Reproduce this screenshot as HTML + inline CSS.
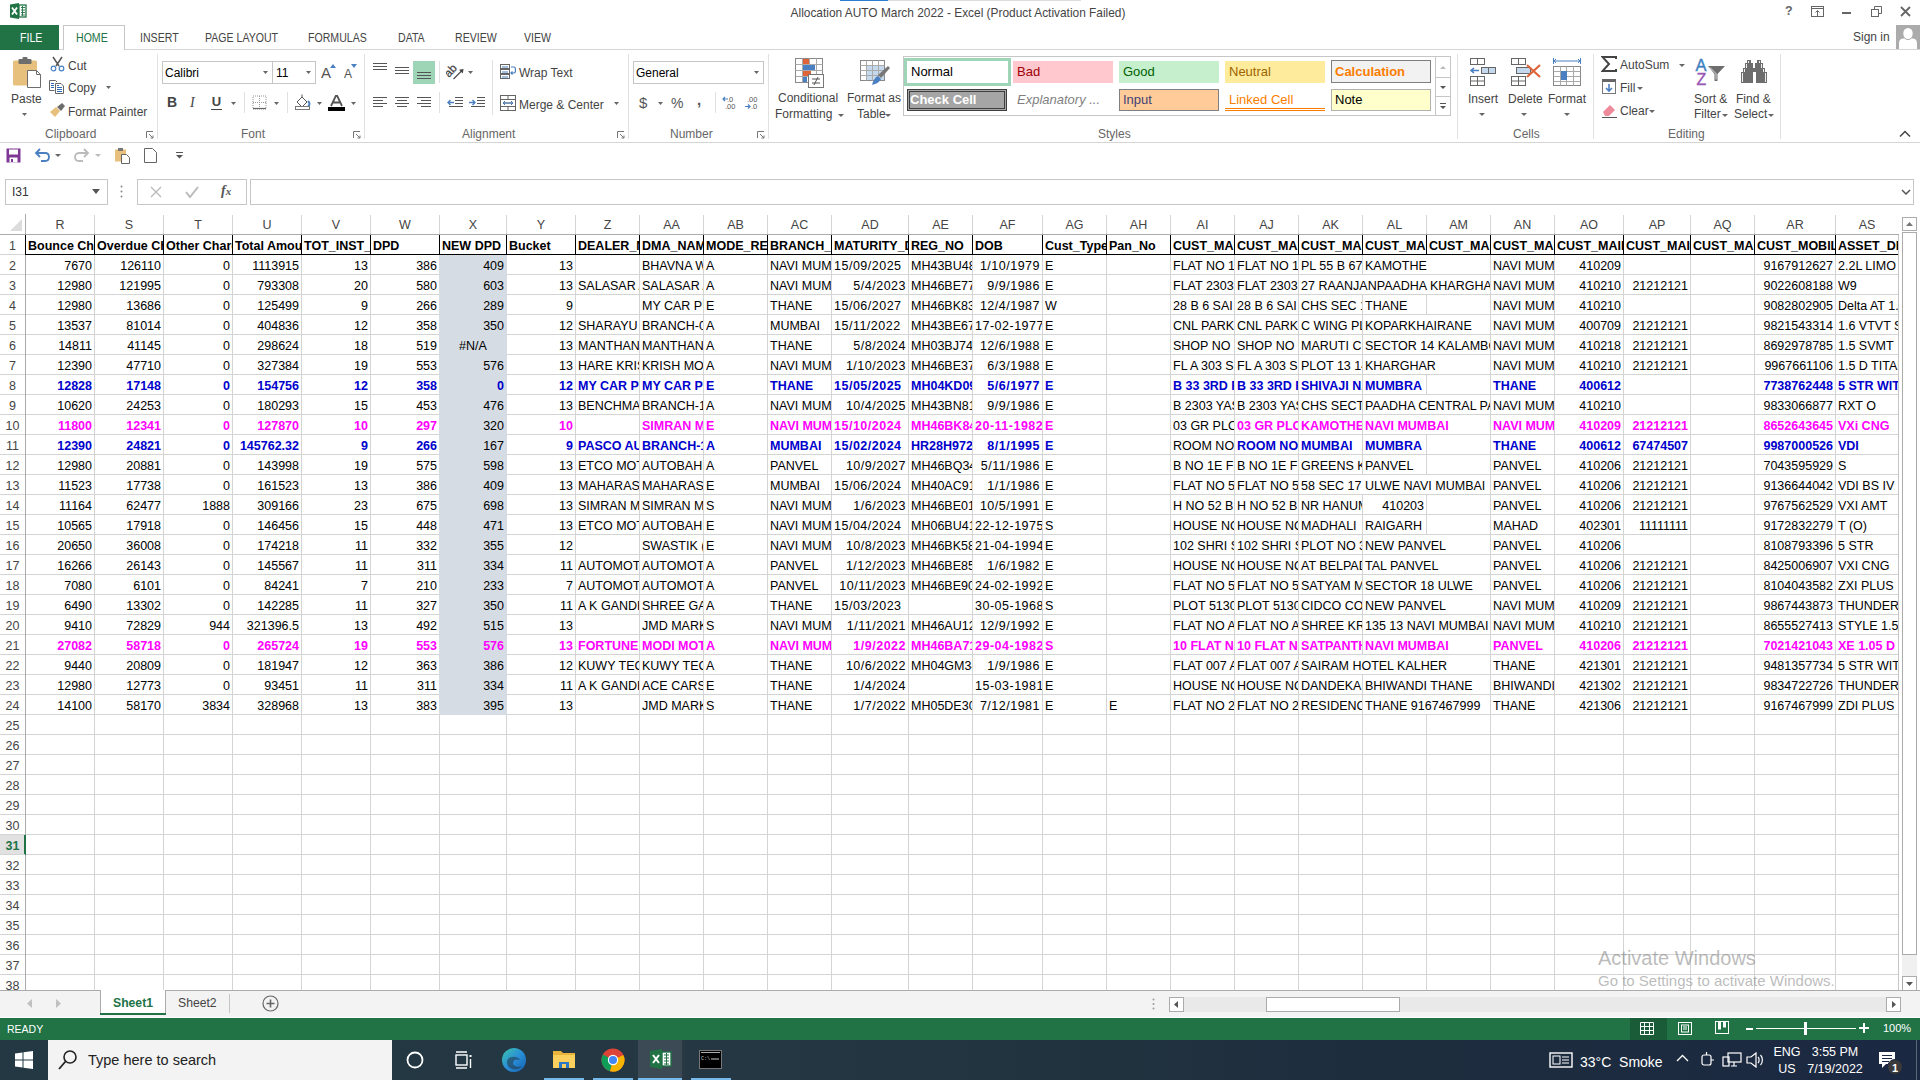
<!DOCTYPE html><html><head><meta charset="utf-8"><style>

*{box-sizing:border-box}
html,body{margin:0;padding:0;width:1920px;height:1080px;overflow:hidden;background:#fff;font-family:"Liberation Sans", sans-serif}
.abs{position:absolute}
.ch{position:absolute;top:1px;height:19px;line-height:21px;text-align:center;font-size:12.5px;color:#444}
.rh{position:absolute;left:0;width:25px;height:19px;line-height:23px;text-align:center;font-size:12.5px;color:#444}
.c{position:absolute;height:20px;line-height:23px;font-size:12.5px;white-space:pre;overflow:hidden;padding:0 2px;border-right:1px solid #d4d4d4;border-bottom:1px solid #d4d4d4}
.c.b{font-weight:bold}
.c.r{text-align:right}
.c.ctr{text-align:center}
.tab{position:absolute;top:30px;font-size:12.3px;color:#444;line-height:16px;transform:scaleX(0.86);transform-origin:0 0;white-space:nowrap}
.gsep{position:absolute;top:54px;width:1px;height:85px;background:#e1e1e1}
.glab{position:absolute;top:127px;font-size:12px;color:#666;line-height:15px}
.rt{position:absolute;font-size:12px;color:#444;line-height:16px;white-space:nowrap}
.box{position:absolute;border:1px solid #c6c6c6;background:#fff}
.vsep{position:absolute;width:1px;background:#e1e1e1}
.sty{position:absolute;font-size:13px;line-height:17px;white-space:nowrap}

</style></head><body>
<!-- title bar -->
<svg class="abs" style="left:9px;top:2px" width="19" height="18" viewBox="0 0 19 18">
  <path d="M1 2.5 L10 1 L10 17 L1 15.5 Z" fill="#217346"/>
  <rect x="10" y="3" width="7" height="12" fill="#fff" stroke="#217346" stroke-width="1.3"/>
  <path d="M12 5.5h4M12 8h4M12 10.5h4M12 13h4M13.5 4v10" stroke="#217346" stroke-width="0.9"/>
  <path d="M3 5.5 L8 12.5 M8 5.5 L3 12.5" stroke="#fff" stroke-width="1.8"/>
</svg>
<div class="abs" style="left:840px;top:0;width:48px;height:1px;background:#2b7cd3"></div><div class="abs" style="left:888px;top:0;width:193px;height:1px;background:#ddd"></div>
<div class="abs" style="left:0;top:6px;width:1916px;text-align:center;font-size:11.9px;color:#444;line-height:15px">Allocation AUTO March 2022 - Excel (Product Activation Failed)</div>
<!-- window buttons -->
<div class="abs" style="left:1785px;top:3px;font-size:12.5px;font-weight:bold;color:#666;line-height:16px">?</div>
<svg class="abs" style="left:1811px;top:6px" width="13" height="11"><rect x="0.5" y="0.5" width="12" height="10" fill="none" stroke="#666"/><path d="M0.5 2.5h12" stroke="#666"/><path d="M6.5 10V5M4.5 6.5l2-2 2 2" stroke="#666" fill="none"/></svg>
<div class="abs" style="left:1842px;top:12px;width:9px;height:2px;background:#666"></div>
<svg class="abs" style="left:1871px;top:6px" width="11" height="11"><path d="M3.5 3V0.5h7v7H8" fill="none" stroke="#666"/><rect x="0.5" y="3.5" width="7" height="7" fill="none" stroke="#666"/></svg>
<svg class="abs" style="left:1900px;top:6px" width="11" height="11"><path d="M1 1l9 9M10 1L1 10" stroke="#666" stroke-width="1.8"/></svg>

<!-- tabs -->
<div class="abs" style="left:0;top:49px;width:1920px;height:1px;background:#d5d5d5"></div>
<div class="abs" style="left:0;top:25px;width:59px;height:25px;background:#217346"></div><div class="tab" style="left:20px;color:#fff">FILE</div>
<div class="abs" style="left:63px;top:25px;width:62px;height:25px;background:#fff;border:1px solid #c6c6c6;border-bottom:none"></div><div class="tab" style="left:76px;color:#217346">HOME</div>
<div class="tab" style="left:140px">INSERT</div>
<div class="tab" style="left:205px">PAGE LAYOUT</div>
<div class="tab" style="left:308px">FORMULAS</div>
<div class="tab" style="left:398px">DATA</div>
<div class="tab" style="left:455px">REVIEW</div>
<div class="tab" style="left:524px">VIEW</div>
<div class="abs" style="left:1853px;top:30px;font-size:12px;color:#444;line-height:15px">Sign in</div>
<svg class="abs" style="left:1896px;top:25px" width="24" height="24"><rect width="24" height="24" fill="#ababab"/><ellipse cx="12" cy="8.5" rx="4.7" ry="5.6" fill="#fff"/><path d="M3 24V19C3 14.5 5 13.5 8.5 13.5Q12 16.5 15.5 13.5C19 13.5 21 14.5 21 19V24Z" fill="#fff"/></svg>

<!-- ribbon -->
<div class="abs" style="left:0;top:142px;width:1920px;height:1px;background:#d5d5d5"></div>
<!-- group separators -->
<div class="gsep" style="left:157px"></div>
<div class="gsep" style="left:364px"></div>
<div class="gsep" style="left:628px"></div>
<div class="gsep" style="left:768px"></div>
<div class="gsep" style="left:1457px"></div>
<div class="gsep" style="left:1593px"></div>
<div class="gsep" style="left:1780px"></div>
<!-- group labels -->
<div class="glab" style="left:45px">Clipboard</div>
<div class="glab" style="left:241px">Font</div>
<div class="glab" style="left:462px">Alignment</div>
<div class="glab" style="left:670px">Number</div>
<div class="glab" style="left:1098px">Styles</div>
<div class="glab" style="left:1513px">Cells</div>
<div class="glab" style="left:1668px">Editing</div>
<!-- launchers -->
<svg class="abs launch" style="left:146px;top:131px" width="8" height="8"><path d="M0.5 7V0.5H7M3 3l4 4M7 4.5V7H4.5" fill="none" stroke="#777"/></svg>
<svg class="abs launch" style="left:353px;top:131px" width="8" height="8"><path d="M0.5 7V0.5H7M3 3l4 4M7 4.5V7H4.5" fill="none" stroke="#777"/></svg>
<svg class="abs launch" style="left:617px;top:131px" width="8" height="8"><path d="M0.5 7V0.5H7M3 3l4 4M7 4.5V7H4.5" fill="none" stroke="#777"/></svg>
<svg class="abs launch" style="left:757px;top:131px" width="8" height="8"><path d="M0.5 7V0.5H7M3 3l4 4M7 4.5V7H4.5" fill="none" stroke="#777"/></svg>
<svg class="abs" style="left:1899px;top:130px" width="12" height="8"><path d="M1 6.5l5-5 5 5" fill="none" stroke="#444" stroke-width="1.5"/></svg>

<!-- Clipboard -->
<svg class="abs" style="left:12px;top:57px" width="31" height="33">
  <rect x="1" y="3.5" width="24" height="25" rx="1.5" fill="#e8c07d"/>
  <rect x="6.5" y="2" width="13" height="5" rx="1" fill="#6d6d6d"/>
  <rect x="10.5" y="0" width="5" height="4" rx="1" fill="#6d6d6d"/>
  <path d="M15.5 13.5h9l4 4v13h-13z" fill="#fff" stroke="#6d6d6d"/>
  <path d="M24.5 13.5v4h4" fill="none" stroke="#6d6d6d"/>
</svg>
<div class="rt" style="left:11px;top:91px">Paste</div>
<svg class="abs" style="left:22px;top:113px" width="5" height="3"><path d="M0 0h5l-2.5 3z" fill="#666"/></svg>
<svg class="abs" style="left:50px;top:56px" width="15" height="16"><path d="M3 1l6 9M12 1L6 10" stroke="#555" stroke-width="1.5"/><circle cx="3.5" cy="12.5" r="2.3" fill="none" stroke="#4a7fc1" stroke-width="1.2"/><circle cx="11.5" cy="12.5" r="2.3" fill="none" stroke="#4a7fc1" stroke-width="1.2"/></svg>
<div class="rt" style="left:68px;top:58px">Cut</div>
<svg class="abs" style="left:48px;top:79px" width="17" height="16"><path d="M1.5 11.5V1.5h6l1.5 1.5M1.5 11.5h5" fill="none" stroke="#666"/><path d="M7.5 4.5h5.5l2.5 2.5v7.5h-8z" fill="#fff" stroke="#666"/><path d="M3 4.5h3M3 6.5h3M3 8.5h3M9 8.5h5M9 10.5h5M9 12.5h5M9 6.5h2" stroke="#2e6db4"/></svg>
<div class="rt" style="left:68px;top:80px">Copy</div>
<svg class="abs" style="left:106px;top:86px" width="5" height="3"><path d="M0 0h5l-2.5 3z" fill="#666"/></svg>
<svg class="abs" style="left:49px;top:102px" width="17" height="16"><path d="M1 10l6-5 4 4-5 6z" fill="#e8c07d"/><path d="M8 5l5-4 3 3-4 5z" fill="#6d6d6d"/></svg>
<div class="rt" style="left:68px;top:104px">Format Painter</div>

<!-- Font -->
<div class="box" style="left:162px;top:61px;width:111px;height:23px"></div>
<div class="rt" style="left:165px;top:65px;color:#000">Calibri</div>
<svg class="abs" style="left:263px;top:71px" width="5" height="3"><path d="M0 0h5l-2.5 3z" fill="#666"/></svg>
<div class="box" style="left:272px;top:61px;width:44px;height:23px"></div>
<div class="rt" style="left:276px;top:65px;color:#000">11</div>
<svg class="abs" style="left:306px;top:71px" width="5" height="3"><path d="M0 0h5l-2.5 3z" fill="#666"/></svg>
<div class="abs" style="left:321px;top:64px;font-size:15px;color:#555;line-height:18px">A</div>
<svg class="abs" style="left:330px;top:64px" width="6" height="4"><path d="M0 4h6L3 0z" fill="#4a7fc1"/></svg>
<div class="abs" style="left:344px;top:67px;font-size:12px;color:#555;line-height:15px">A</div>
<svg class="abs" style="left:351px;top:64px" width="6" height="4"><path d="M0 0h6L3 4z" fill="#4a7fc1"/></svg>
<div class="abs" style="left:167px;top:95px;font-size:14px;font-weight:bold;color:#444;line-height:15px">B</div>
<div class="abs" style="left:190px;top:95px;font-size:14px;font-style:italic;font-family:'Liberation Serif',serif;color:#444;line-height:15px">I</div>
<div class="abs" style="left:211px;top:95px;font-size:13px;font-weight:bold;color:#444;line-height:14px;border-bottom:1.5px solid #444;width:11px;text-align:center">U</div>
<svg class="abs" style="left:231px;top:102px" width="5" height="3"><path d="M0 0h5l-2.5 3z" fill="#666"/></svg>
<div class="vsep" style="left:244px;top:92px;height:21px"></div>
<svg class="abs" style="left:252px;top:95px" width="15" height="15"><path d="M1 1h13v13H1zM7.5 1v13M1 7.5h13" fill="none" stroke="#999" stroke-dasharray="1 1"/><path d="M1 13.5h13" stroke="#666" stroke-width="1.2"/></svg>
<svg class="abs" style="left:274px;top:102px" width="5" height="3"><path d="M0 0h5l-2.5 3z" fill="#666"/></svg>
<div class="vsep" style="left:287px;top:92px;height:21px"></div>
<svg class="abs" style="left:294px;top:94px" width="18" height="17"><path d="M3 8l5-5 5 5-5 5z" fill="#fff" stroke="#555"/><path d="M8 3V0.5" stroke="#555"/><path d="M14 7c2 2 2 4 0 5" stroke="#4a7fc1" stroke-width="2" fill="none"/><rect x="1.5" y="12.5" width="14" height="3" fill="#fff" stroke="#777"/></svg>
<svg class="abs" style="left:317px;top:102px" width="5" height="3"><path d="M0 0h5l-2.5 3z" fill="#666"/></svg>
<svg class="abs" style="left:328px;top:95px" width="17" height="16"><path d="M3 11L8 0.5h1L14 11M5 7.5h7" fill="none" stroke="#555" stroke-width="1.8"/><rect x="0" y="12" width="17" height="4" fill="#000"/></svg>
<svg class="abs" style="left:351px;top:102px" width="5" height="3"><path d="M0 0h5l-2.5 3z" fill="#666"/></svg>

<!-- Alignment -->
<svg class="abs" style="left:373px;top:63px" width="15" height="10"><path d="M0 0.5h14M0 3.5h14M0 6.5h14" stroke="#555"/></svg>
<svg class="abs" style="left:395px;top:67px" width="15" height="10"><path d="M0 0.5h14M0 3.5h14M0 6.5h14" stroke="#555"/></svg>
<div class="abs" style="left:413px;top:61px;width:22px;height:23px;background:#9fd5b7"></div>
<svg class="abs" style="left:417px;top:72px" width="15" height="10"><path d="M0 0.5h14M0 3.5h14M0 6.5h14" stroke="#555"/></svg>
<div class="vsep" style="left:439px;top:61px;height:22px"></div>
<svg class="abs" style="left:446px;top:63px" width="20" height="18"><text x="0" y="0" font-size="11.5" fill="#444" font-family="Liberation Sans" stroke="#444" stroke-width="0.3" transform="translate(3 15) rotate(-48)">ab</text><path d="M7.5 16L16.5 7" stroke="#444" stroke-width="1.1"/><path d="M17.5 6L13 6.7 16.8 10.5z" fill="#444"/></svg>
<svg class="abs" style="left:468px;top:71px" width="5" height="3"><path d="M0 0h5l-2.5 3z" fill="#666"/></svg>
<div class="vsep" style="left:492px;top:60px;height:55px"></div>
<svg class="abs" style="left:500px;top:64px" width="17" height="16"><rect x="0.5" y="0.5" width="9" height="4" fill="none" stroke="#666"/><rect x="0.5" y="5.5" width="9" height="4" fill="none" stroke="#666"/><rect x="0.5" y="10.5" width="9" height="4" fill="none" stroke="#666"/><path d="M2 3h6M2 8h6M2 13h6" stroke="#4a7fc1"/><path d="M11 3h3c2 0 2 6 0 6h-3M12.5 7.5L11 9l1.5 1.5" fill="none" stroke="#4a7fc1" stroke-width="1.2"/></svg>
<div class="rt" style="left:519px;top:65px">Wrap Text</div>
<svg class="abs" style="left:500px;top:95px" width="16" height="16"><rect x="0.5" y="0.5" width="15" height="15" fill="#fff" stroke="#666"/><path d="M0.5 4.5h15M0.5 11.5h15M8 0.5v4M8 11.5v4M5 0.5v0M3 8h10M5 6l-2 2 2 2M11 6l2 2-2 2" fill="none" stroke="#666"/><path d="M3 8h10M5 6.5L3 8l2 1.5M11 6.5L13 8l-2 1.5" fill="none" stroke="#4a7fc1"/></svg>
<div class="rt" style="left:519px;top:97px">Merge &amp; Center</div>
<svg class="abs" style="left:614px;top:102px" width="5" height="3"><path d="M0 0h5l-2.5 3z" fill="#666"/></svg>
<svg class="abs" style="left:373px;top:97px" width="15" height="12"><path d="M0 0.5h14M0 3.5h10M0 6.5h14M0 9.5h10" stroke="#555"/></svg>
<svg class="abs" style="left:395px;top:97px" width="15" height="12"><path d="M0 0.5h14M2 3.5h10M0 6.5h14M2 9.5h10" stroke="#555"/></svg>
<svg class="abs" style="left:417px;top:97px" width="15" height="12"><path d="M0 0.5h14M4 3.5h10M0 6.5h14M4 9.5h10" stroke="#555"/></svg>
<div class="vsep" style="left:439px;top:92px;height:21px"></div>
<svg class="abs" style="left:447px;top:97px" width="17" height="12"><path d="M8 0.5h8M8 3.5h8M8 6.5h8M2 9.5h14" stroke="#555"/><path d="M1 5.5h6M3.5 3L1 5.5 3.5 8" fill="none" stroke="#4a7fc1" stroke-width="1.4"/></svg>
<svg class="abs" style="left:469px;top:97px" width="17" height="12"><path d="M8 0.5h8M8 3.5h8M8 6.5h8M2 9.5h14" stroke="#555"/><path d="M0 5.5h6M3.5 3L6 5.5 3.5 8" fill="none" stroke="#4a7fc1" stroke-width="1.4"/></svg>

<!-- Number -->
<div class="box" style="left:633px;top:61px;width:131px;height:23px"></div>
<div class="rt" style="left:636px;top:65px;color:#000">General</div>
<svg class="abs" style="left:754px;top:71px" width="5" height="3"><path d="M0 0h5l-2.5 3z" fill="#666"/></svg>
<div class="abs" style="left:639px;top:94px;font-size:15px;color:#555;line-height:17px">$</div>
<svg class="abs" style="left:658px;top:102px" width="5" height="3"><path d="M0 0h5l-2.5 3z" fill="#666"/></svg>
<div class="abs" style="left:671px;top:95px;font-size:14px;color:#555;line-height:16px">%</div>
<div class="abs" style="left:697px;top:92px;font-size:15px;font-weight:bold;color:#555;line-height:16px">,</div>
<div class="vsep" style="left:715px;top:92px;height:21px"></div>
<svg class="abs" style="left:722px;top:95px" width="16" height="15"><text x="5" y="7" font-size="7.5" fill="#555" font-family="Liberation Sans">.0</text><text x="3" y="14" font-size="7.5" fill="#555" font-family="Liberation Sans">.00</text><path d="M1 4h5M3 2L1 4l2 2" fill="none" stroke="#4a7fc1" stroke-width="1.2"/></svg>
<svg class="abs" style="left:744px;top:95px" width="16" height="15"><text x="3" y="7" font-size="7.5" fill="#555" font-family="Liberation Sans">.00</text><text x="7" y="14" font-size="7.5" fill="#555" font-family="Liberation Sans">.0</text><path d="M1 11.5h5M4 9.5l2 2-2 2" fill="none" stroke="#4a7fc1" stroke-width="1.2"/></svg>

<!-- Conditional formatting / format as table -->
<svg class="abs" style="left:794px;top:57px" width="32" height="32">
  <rect x="1.5" y="1.5" width="27" height="24" fill="#fff" stroke="#888"/>
  <path d="M1.5 7.5h27M1.5 13.5h27M1.5 19.5h27M8.5 1.5v24M15.5 1.5v24M22.5 1.5v24" stroke="#aaa"/>
  <rect x="9" y="2" width="6" height="5" fill="#e0643a"/><rect x="9" y="8" width="12" height="5" fill="#4a7fc1"/><rect x="9" y="14" width="8" height="5" fill="#e0643a"/><rect x="9" y="20" width="4" height="5" fill="#4a7fc1"/>
  <rect x="14.5" y="17.5" width="15" height="13" fill="#fff" stroke="#777"/>
  <path d="M18 22h8M18 26h8M24 20l-4 8" stroke="#555"/>
</svg>
<div class="rt" style="left:778px;top:90px">Conditional</div>
<div class="rt" style="left:775px;top:106px">Formatting</div>
<svg class="abs" style="left:838px;top:114px" width="6" height="3"><path d="M0 0h6l-3 3z" fill="#666"/></svg>
<svg class="abs" style="left:859px;top:59px" width="32" height="30">
  <rect x="1.5" y="1.5" width="24" height="20" fill="#fff" stroke="#888"/>
  <rect x="7" y="6" width="18" height="15" fill="#c5d9ee"/>
  <path d="M1.5 6.5h24M1.5 11.5h24M1.5 16.5h24M7.5 1.5v20M13.5 1.5v20M19.5 1.5v20" stroke="#aaa"/>
  <path d="M29 7l2 2-9 10-3-3z" fill="#777"/><path d="M19 17l3 3c-2 4-6 5-9 6 1-3 2-7 6-9z" fill="#4a7fc1"/>
</svg>
<div class="rt" style="left:847px;top:90px">Format as</div>
<div class="rt" style="left:857px;top:106px">Table</div>
<svg class="abs" style="left:885px;top:114px" width="6" height="3"><path d="M0 0h6l-3 3z" fill="#666"/></svg>

<!-- Styles gallery -->
<div class="abs" style="left:903px;top:56px;width:548px;height:60px;border:1px solid #c6c6c6"></div>
<div class="abs" style="left:904px;top:58px;width:107px;height:28px;border:3px solid #9fd5b7;background:#fff"></div>
<div class="sty" style="left:911px;top:63px;color:#000">Normal</div>
<div class="abs" style="left:1013px;top:61px;width:100px;height:22px;background:#ffc7ce"></div>
<div class="sty" style="left:1017px;top:63px;color:#9c0006">Bad</div>
<div class="abs" style="left:1119px;top:61px;width:100px;height:22px;background:#c6efce"></div>
<div class="sty" style="left:1123px;top:63px;color:#006100">Good</div>
<div class="abs" style="left:1225px;top:61px;width:100px;height:22px;background:#ffeb9c"></div>
<div class="sty" style="left:1229px;top:63px;color:#9c6500">Neutral</div>
<div class="abs" style="left:1331px;top:60px;width:100px;height:23px;background:#f2f2f2;border:1px solid #7f7f7f"></div>
<div class="sty" style="left:1335px;top:63px;color:#fa7d00;font-weight:bold">Calculation</div>
<div class="abs" style="left:907px;top:89px;width:100px;height:22px;background:#a5a5a5;border:3px double #3f3f3f"></div>
<div class="sty" style="left:910px;top:91px;color:#fff;font-weight:bold">Check Cell</div>
<div class="sty" style="left:1017px;top:91px;color:#7f7f7f;font-style:italic">Explanatory ...</div>
<div class="abs" style="left:1119px;top:89px;width:100px;height:22px;background:#ffcc99;border:1px solid #7f7f7f"></div>
<div class="sty" style="left:1123px;top:91px;color:#3f3f76">Input</div>
<div class="sty" style="left:1229px;top:91px;color:#fa7d00">Linked Cell</div>
<div class="abs" style="left:1225px;top:108px;width:100px;height:3px;border-top:1px solid #fa7d00;border-bottom:1px solid #fa7d00"></div>
<div class="abs" style="left:1331px;top:89px;width:100px;height:22px;background:#ffffcc;border:1px solid #b2b2b2"></div>
<div class="sty" style="left:1335px;top:91px;color:#000">Note</div>
<div class="abs" style="left:1435px;top:57px;width:16px;height:58px;border-left:1px solid #c6c6c6"></div>
<div class="abs" style="left:1435px;top:77px;width:16px;height:1px;background:#c6c6c6"></div>
<div class="abs" style="left:1435px;top:96px;width:16px;height:1px;background:#c6c6c6"></div>
<svg class="abs" style="left:1440px;top:66px" width="6" height="3"><path d="M0 3h6L3 0z" fill="#bbb"/></svg>
<svg class="abs" style="left:1440px;top:86px" width="6" height="3"><path d="M0 0h6l-3 3z" fill="#555"/></svg>
<svg class="abs" style="left:1440px;top:103px" width="6" height="6"><path d="M0 0.5h6" stroke="#555"/><path d="M0 3h6l-3 3z" fill="#555"/></svg>

<!-- Cells -->
<svg class="abs" style="left:1469px;top:57px" width="29" height="29">
  <rect x="1.5" y="1.5" width="14" height="6" fill="#fff" stroke="#666"/><path d="M8.5 1.5v6" stroke="#666"/>
  <rect x="12.5" y="10.5" width="14" height="6" fill="#c5d9ee" stroke="#666"/><path d="M19.5 10.5v6" stroke="#666"/>
  <path d="M2 13.5h8M5 11l-3 2.5L5 16" fill="none" stroke="#4a7fc1" stroke-width="1.6"/>
  <rect x="1.5" y="19.5" width="14" height="9" fill="#fff" stroke="#666"/><path d="M8.5 19.5v9M1.5 24h14" stroke="#666"/>
</svg>
<div class="rt" style="left:1468px;top:91px">Insert</div>
<svg class="abs" style="left:1479px;top:113px" width="6" height="3"><path d="M0 0h6l-3 3z" fill="#666"/></svg>
<svg class="abs" style="left:1510px;top:57px" width="32" height="29">
  <rect x="1.5" y="1.5" width="14" height="6" fill="#fff" stroke="#666"/><path d="M8.5 1.5v6" stroke="#666"/>
  <rect x="6.5" y="10.5" width="14" height="6" fill="#c5d9ee" stroke="#666"/>
  <rect x="1.5" y="19.5" width="14" height="9" fill="#fff" stroke="#666"/><path d="M8.5 19.5v9M1.5 24h14" stroke="#666"/>
  <path d="M17 8l13 12M30 8L17 20" stroke="#e0643a" stroke-width="2.2"/>
</svg>
<div class="rt" style="left:1508px;top:91px">Delete</div>
<svg class="abs" style="left:1521px;top:113px" width="6" height="3"><path d="M0 0h6l-3 3z" fill="#666"/></svg>
<svg class="abs" style="left:1552px;top:57px" width="30" height="31">
  <path d="M2 4h26M2 4l2-2M2 4l2 2M28 4l-2-2M28 4l-2 2M1.5 1v6M28.5 1v6" fill="none" stroke="#4a7fc1"/>
  <rect x="1.5" y="9.5" width="27" height="19" fill="#fff" stroke="#888"/>
  <path d="M1.5 14.5h27M1.5 19.5h27M1.5 24.5h27M8.5 9.5v19M14.5 9.5v19M21.5 9.5v19" stroke="#aaa"/>
  <rect x="9" y="14" width="6" height="9" fill="#4a7fc1"/>
</svg>
<div class="rt" style="left:1548px;top:91px">Format</div>
<svg class="abs" style="left:1564px;top:113px" width="6" height="3"><path d="M0 0h6l-3 3z" fill="#666"/></svg>

<!-- Editing -->
<svg class="abs" style="left:1601px;top:56px" width="16" height="16"><path d="M15 3V1H1.5L8 8 1.5 15H15v-2" fill="none" stroke="#444" stroke-width="2"/></svg>
<div class="rt" style="left:1620px;top:57px">AutoSum</div>
<svg class="abs" style="left:1679px;top:64px" width="6" height="3"><path d="M0 0h6l-3 3z" fill="#666"/></svg>
<svg class="abs" style="left:1601px;top:78px" width="16" height="17"><rect x="1.5" y="1.5" width="13" height="14" fill="#fff" stroke="#777"/><rect x="1" y="1" width="14" height="3" fill="#666"/><path d="M8 6v7M5 10l3 3 3-3" fill="none" stroke="#4a7fc1" stroke-width="1.6"/></svg>
<div class="rt" style="left:1620px;top:80px">Fill</div>
<svg class="abs" style="left:1637px;top:87px" width="6" height="3"><path d="M0 0h6l-3 3z" fill="#666"/></svg>
<svg class="abs" style="left:1601px;top:102px" width="17" height="16"><path d="M2 10l7-7 5 5-6 6H4z" fill="#ee8a9a"/><path d="M1 15.5h15" stroke="#555"/></svg>
<div class="rt" style="left:1620px;top:103px">Clear</div>
<svg class="abs" style="left:1649px;top:110px" width="6" height="3"><path d="M0 0h6l-3 3z" fill="#666"/></svg>
<svg class="abs" style="left:1695px;top:57px" width="32" height="30">
  <text x="0.5" y="14" font-size="16.5" fill="#3d7fc1" font-family="Liberation Sans" stroke="#3d7fc1" stroke-width="0.4">A</text>
  <text x="1.5" y="28" font-size="16" fill="#9b59b6" font-family="Liberation Sans" stroke="#9b59b6" stroke-width="0.4">Z</text>
  <path d="M13 9h17l-7.5 8v7h-3v-7z" fill="#6d6d6d"/><path d="M15 10.5l6 6v6" fill="none" stroke="#fff" stroke-width="0.8"/>
</svg>
<div class="rt" style="left:1694px;top:91px">Sort &amp;</div>
<div class="rt" style="left:1694px;top:106px">Filter</div>
<svg class="abs" style="left:1722px;top:114px" width="6" height="3"><path d="M0 0h6l-3 3z" fill="#666"/></svg>
<svg class="abs" style="left:1740px;top:59px" width="28" height="25"><path d="M7 1h4v3h2v5h1v4h-1v11H1V13h2V9h2V4h2zM17 1h4v3h2v5h2v4h2v11H16V13h-2V9h1V4h2z" fill="#6d6d6d"/><path d="M2.5 14v9M4.5 10v3M6.5 5v4M8.5 2v2M25.5 14v9M23.5 10v3M21.5 5v4M19.5 2v2" stroke="#fff" stroke-width="0.9"/></svg>
<div class="rt" style="left:1736px;top:91px">Find &amp;</div>
<div class="rt" style="left:1734px;top:106px">Select</div>
<svg class="abs" style="left:1768px;top:114px" width="6" height="3"><path d="M0 0h6l-3 3z" fill="#666"/></svg>

<!-- QAT -->
<svg class="abs" style="left:6px;top:148px" width="15" height="15"><rect x="0.5" y="0.5" width="14" height="14" fill="#7e3794"/><rect x="3" y="1.5" width="9" height="5" fill="#fff"/><rect x="3.5" y="9.5" width="8" height="5" fill="#fff"/><rect x="5" y="11" width="2" height="3" fill="#7e3794"/></svg>
<svg class="abs" style="left:34px;top:147px" width="17" height="16"><path d="M3 6h8c3 0 4 2 4 4s-1 4-4 4H7" fill="none" stroke="#4a7fc1" stroke-width="1.8"/><path d="M6 2L2 6l4 4" fill="none" stroke="#4a7fc1" stroke-width="1.8"/></svg>
<svg class="abs" style="left:55px;top:154px" width="6" height="3"><path d="M0 0h6l-3 3z" fill="#666"/></svg>
<svg class="abs" style="left:73px;top:147px" width="17" height="16"><path d="M14 6H6c-3 0-4 2-4 4s1 4 4 4h4" fill="none" stroke="#bbb" stroke-width="1.8"/><path d="M11 2l4 4-4 4" fill="none" stroke="#bbb" stroke-width="1.8"/></svg>
<svg class="abs" style="left:95px;top:154px" width="6" height="3"><path d="M0 0h6l-3 3z" fill="#bbb"/></svg>
<svg class="abs" style="left:114px;top:147px" width="17" height="17"><rect x="1" y="2.5" width="11" height="12" fill="#e8c07d"/><rect x="4" y="1" width="5" height="3" fill="#777"/><path d="M7.5 7.5h5l3 3v6h-8z" fill="#fff" stroke="#666"/></svg>
<svg class="abs" style="left:144px;top:148px" width="13" height="15"><path d="M0.5 0.5h8l4 4v10H0.5z" fill="#fff" stroke="#666"/></svg>
<svg class="abs" style="left:176px;top:152px" width="7" height="7"><path d="M0 0.5h7" stroke="#555"/><path d="M0 3h7l-3.5 3.5z" fill="#555"/></svg>

<!-- formula bar -->
<div class="box" style="left:5px;top:179px;width:103px;height:26px"></div>
<div class="rt" style="left:12px;top:184px;color:#333">I31</div>
<svg class="abs" style="left:92px;top:189px" width="8" height="5"><path d="M0 0h8l-4 5z" fill="#555"/></svg>
<svg class="abs" style="left:120px;top:185px" width="3" height="13"><circle cx="1.5" cy="1.5" r="1" fill="#888"/><circle cx="1.5" cy="6.5" r="1" fill="#888"/><circle cx="1.5" cy="11.5" r="1" fill="#888"/></svg>
<div class="box" style="left:137px;top:179px;width:110px;height:26px"></div>
<svg class="abs" style="left:150px;top:186px" width="12" height="12"><path d="M1 1l10 10M11 1L1 11" stroke="#bbb" stroke-width="1.4"/></svg>
<svg class="abs" style="left:185px;top:186px" width="14" height="12"><path d="M1 6l4 5 8-10" fill="none" stroke="#bbb" stroke-width="2"/></svg>
<div class="abs" style="left:221px;top:183px;font-size:14px;font-style:italic;font-family:'Liberation Serif',serif;color:#555;line-height:16px;font-weight:bold">f<span style="font-size:11px">x</span></div>
<div class="box" style="left:250px;top:179px;width:1664px;height:26px"></div>
<svg class="abs" style="left:1901px;top:189px" width="10" height="6"><path d="M1 1l4 4 4-4" fill="none" stroke="#555" stroke-width="1.5"/></svg>

<div style="position:absolute;left:0;top:214px;width:1899px;height:777px;overflow:hidden;background:#fff">
<div style="position:absolute;left:0;top:20px;width:1899px;height:1px;background:#ababab"></div>
<svg style="position:absolute;left:10px;top:5px" width="12" height="12"><polygon points="12,0 12,12 0,12" fill="#dcdcdc"/></svg>
<div class="ch" style="left:26px;width:68px">R</div>
<div style="position:absolute;left:94px;top:1px;width:1px;height:19px;background:#d4d4d4"></div>
<div class="ch" style="left:95px;width:68px">S</div>
<div style="position:absolute;left:163px;top:1px;width:1px;height:19px;background:#d4d4d4"></div>
<div class="ch" style="left:164px;width:68px">T</div>
<div style="position:absolute;left:232px;top:1px;width:1px;height:19px;background:#d4d4d4"></div>
<div class="ch" style="left:233px;width:68px">U</div>
<div style="position:absolute;left:301px;top:1px;width:1px;height:19px;background:#d4d4d4"></div>
<div class="ch" style="left:302px;width:68px">V</div>
<div style="position:absolute;left:370px;top:1px;width:1px;height:19px;background:#d4d4d4"></div>
<div class="ch" style="left:371px;width:68px">W</div>
<div style="position:absolute;left:439px;top:1px;width:1px;height:19px;background:#d4d4d4"></div>
<div class="ch" style="left:440px;width:66px">X</div>
<div style="position:absolute;left:506px;top:1px;width:1px;height:19px;background:#d4d4d4"></div>
<div class="ch" style="left:507px;width:68px">Y</div>
<div style="position:absolute;left:575px;top:1px;width:1px;height:19px;background:#d4d4d4"></div>
<div class="ch" style="left:576px;width:63px">Z</div>
<div style="position:absolute;left:639px;top:1px;width:1px;height:19px;background:#d4d4d4"></div>
<div class="ch" style="left:640px;width:63px">AA</div>
<div style="position:absolute;left:703px;top:1px;width:1px;height:19px;background:#d4d4d4"></div>
<div class="ch" style="left:704px;width:63px">AB</div>
<div style="position:absolute;left:767px;top:1px;width:1px;height:19px;background:#d4d4d4"></div>
<div class="ch" style="left:768px;width:63px">AC</div>
<div style="position:absolute;left:831px;top:1px;width:1px;height:19px;background:#d4d4d4"></div>
<div class="ch" style="left:832px;width:76px">AD</div>
<div style="position:absolute;left:908px;top:1px;width:1px;height:19px;background:#d4d4d4"></div>
<div class="ch" style="left:909px;width:63px">AE</div>
<div style="position:absolute;left:972px;top:1px;width:1px;height:19px;background:#d4d4d4"></div>
<div class="ch" style="left:973px;width:69px">AF</div>
<div style="position:absolute;left:1042px;top:1px;width:1px;height:19px;background:#d4d4d4"></div>
<div class="ch" style="left:1043px;width:63px">AG</div>
<div style="position:absolute;left:1106px;top:1px;width:1px;height:19px;background:#d4d4d4"></div>
<div class="ch" style="left:1107px;width:63px">AH</div>
<div style="position:absolute;left:1170px;top:1px;width:1px;height:19px;background:#d4d4d4"></div>
<div class="ch" style="left:1171px;width:63px">AI</div>
<div style="position:absolute;left:1234px;top:1px;width:1px;height:19px;background:#d4d4d4"></div>
<div class="ch" style="left:1235px;width:63px">AJ</div>
<div style="position:absolute;left:1298px;top:1px;width:1px;height:19px;background:#d4d4d4"></div>
<div class="ch" style="left:1299px;width:63px">AK</div>
<div style="position:absolute;left:1362px;top:1px;width:1px;height:19px;background:#d4d4d4"></div>
<div class="ch" style="left:1363px;width:63px">AL</div>
<div style="position:absolute;left:1426px;top:1px;width:1px;height:19px;background:#d4d4d4"></div>
<div class="ch" style="left:1427px;width:63px">AM</div>
<div style="position:absolute;left:1490px;top:1px;width:1px;height:19px;background:#d4d4d4"></div>
<div class="ch" style="left:1491px;width:63px">AN</div>
<div style="position:absolute;left:1554px;top:1px;width:1px;height:19px;background:#d4d4d4"></div>
<div class="ch" style="left:1555px;width:68px">AO</div>
<div style="position:absolute;left:1623px;top:1px;width:1px;height:19px;background:#d4d4d4"></div>
<div class="ch" style="left:1624px;width:66px">AP</div>
<div style="position:absolute;left:1690px;top:1px;width:1px;height:19px;background:#d4d4d4"></div>
<div class="ch" style="left:1691px;width:63px">AQ</div>
<div style="position:absolute;left:1754px;top:1px;width:1px;height:19px;background:#d4d4d4"></div>
<div class="ch" style="left:1755px;width:80px">AR</div>
<div style="position:absolute;left:1835px;top:1px;width:1px;height:19px;background:#d4d4d4"></div>
<div class="ch" style="left:1836px;width:62px">AS</div>
<div style="position:absolute;left:25px;top:0;width:1px;height:777px;background:#ababab"></div>
<div class="rh" style="top:21px">1</div>
<div style="position:absolute;left:0;top:40px;width:25px;height:1px;background:#d4d4d4"></div>
<div class="rh" style="top:41px">2</div>
<div style="position:absolute;left:0;top:60px;width:25px;height:1px;background:#d4d4d4"></div>
<div class="rh" style="top:61px">3</div>
<div style="position:absolute;left:0;top:80px;width:25px;height:1px;background:#d4d4d4"></div>
<div class="rh" style="top:81px">4</div>
<div style="position:absolute;left:0;top:100px;width:25px;height:1px;background:#d4d4d4"></div>
<div class="rh" style="top:101px">5</div>
<div style="position:absolute;left:0;top:120px;width:25px;height:1px;background:#d4d4d4"></div>
<div class="rh" style="top:121px">6</div>
<div style="position:absolute;left:0;top:140px;width:25px;height:1px;background:#d4d4d4"></div>
<div class="rh" style="top:141px">7</div>
<div style="position:absolute;left:0;top:160px;width:25px;height:1px;background:#d4d4d4"></div>
<div class="rh" style="top:161px">8</div>
<div style="position:absolute;left:0;top:180px;width:25px;height:1px;background:#d4d4d4"></div>
<div class="rh" style="top:181px">9</div>
<div style="position:absolute;left:0;top:200px;width:25px;height:1px;background:#d4d4d4"></div>
<div class="rh" style="top:201px">10</div>
<div style="position:absolute;left:0;top:220px;width:25px;height:1px;background:#d4d4d4"></div>
<div class="rh" style="top:221px">11</div>
<div style="position:absolute;left:0;top:240px;width:25px;height:1px;background:#d4d4d4"></div>
<div class="rh" style="top:241px">12</div>
<div style="position:absolute;left:0;top:260px;width:25px;height:1px;background:#d4d4d4"></div>
<div class="rh" style="top:261px">13</div>
<div style="position:absolute;left:0;top:280px;width:25px;height:1px;background:#d4d4d4"></div>
<div class="rh" style="top:281px">14</div>
<div style="position:absolute;left:0;top:300px;width:25px;height:1px;background:#d4d4d4"></div>
<div class="rh" style="top:301px">15</div>
<div style="position:absolute;left:0;top:320px;width:25px;height:1px;background:#d4d4d4"></div>
<div class="rh" style="top:321px">16</div>
<div style="position:absolute;left:0;top:340px;width:25px;height:1px;background:#d4d4d4"></div>
<div class="rh" style="top:341px">17</div>
<div style="position:absolute;left:0;top:360px;width:25px;height:1px;background:#d4d4d4"></div>
<div class="rh" style="top:361px">18</div>
<div style="position:absolute;left:0;top:380px;width:25px;height:1px;background:#d4d4d4"></div>
<div class="rh" style="top:381px">19</div>
<div style="position:absolute;left:0;top:400px;width:25px;height:1px;background:#d4d4d4"></div>
<div class="rh" style="top:401px">20</div>
<div style="position:absolute;left:0;top:420px;width:25px;height:1px;background:#d4d4d4"></div>
<div class="rh" style="top:421px">21</div>
<div style="position:absolute;left:0;top:440px;width:25px;height:1px;background:#d4d4d4"></div>
<div class="rh" style="top:441px">22</div>
<div style="position:absolute;left:0;top:460px;width:25px;height:1px;background:#d4d4d4"></div>
<div class="rh" style="top:461px">23</div>
<div style="position:absolute;left:0;top:480px;width:25px;height:1px;background:#d4d4d4"></div>
<div class="rh" style="top:481px">24</div>
<div style="position:absolute;left:0;top:500px;width:25px;height:1px;background:#d4d4d4"></div>
<div class="rh" style="top:501px">25</div>
<div style="position:absolute;left:0;top:520px;width:25px;height:1px;background:#d4d4d4"></div>
<div class="rh" style="top:521px">26</div>
<div style="position:absolute;left:0;top:540px;width:25px;height:1px;background:#d4d4d4"></div>
<div class="rh" style="top:541px">27</div>
<div style="position:absolute;left:0;top:560px;width:25px;height:1px;background:#d4d4d4"></div>
<div class="rh" style="top:561px">28</div>
<div style="position:absolute;left:0;top:580px;width:25px;height:1px;background:#d4d4d4"></div>
<div class="rh" style="top:581px">29</div>
<div style="position:absolute;left:0;top:600px;width:25px;height:1px;background:#d4d4d4"></div>
<div class="rh" style="top:601px">30</div>
<div style="position:absolute;left:0;top:620px;width:25px;height:1px;background:#d4d4d4"></div>
<div style="position:absolute;left:0;top:621px;width:25px;height:19px;background:#e1e1e1"></div>
<div style="position:absolute;left:24px;top:621px;width:2px;height:20px;background:#217346"></div>
<div class="rh" style="top:621px;color:#217346;font-weight:bold">31</div>
<div style="position:absolute;left:0;top:640px;width:25px;height:1px;background:#d4d4d4"></div>
<div class="rh" style="top:641px">32</div>
<div style="position:absolute;left:0;top:660px;width:25px;height:1px;background:#d4d4d4"></div>
<div class="rh" style="top:661px">33</div>
<div style="position:absolute;left:0;top:680px;width:25px;height:1px;background:#d4d4d4"></div>
<div class="rh" style="top:681px">34</div>
<div style="position:absolute;left:0;top:700px;width:25px;height:1px;background:#d4d4d4"></div>
<div class="rh" style="top:701px">35</div>
<div style="position:absolute;left:0;top:720px;width:25px;height:1px;background:#d4d4d4"></div>
<div class="rh" style="top:721px">36</div>
<div style="position:absolute;left:0;top:740px;width:25px;height:1px;background:#d4d4d4"></div>
<div class="rh" style="top:741px">37</div>
<div style="position:absolute;left:0;top:760px;width:25px;height:1px;background:#d4d4d4"></div>
<div class="rh" style="top:761px">38</div>
<div style="position:absolute;left:0;top:780px;width:25px;height:1px;background:#d4d4d4"></div>
<div style="position:absolute;left:26px;top:520px;width:1872px;height:1px;background:#d4d4d4"></div>
<div style="position:absolute;left:26px;top:540px;width:1872px;height:1px;background:#d4d4d4"></div>
<div style="position:absolute;left:26px;top:560px;width:1872px;height:1px;background:#d4d4d4"></div>
<div style="position:absolute;left:26px;top:580px;width:1872px;height:1px;background:#d4d4d4"></div>
<div style="position:absolute;left:26px;top:600px;width:1872px;height:1px;background:#d4d4d4"></div>
<div style="position:absolute;left:26px;top:620px;width:1872px;height:1px;background:#d4d4d4"></div>
<div style="position:absolute;left:26px;top:640px;width:1872px;height:1px;background:#d4d4d4"></div>
<div style="position:absolute;left:26px;top:660px;width:1872px;height:1px;background:#d4d4d4"></div>
<div style="position:absolute;left:26px;top:680px;width:1872px;height:1px;background:#d4d4d4"></div>
<div style="position:absolute;left:26px;top:700px;width:1872px;height:1px;background:#d4d4d4"></div>
<div style="position:absolute;left:26px;top:720px;width:1872px;height:1px;background:#d4d4d4"></div>
<div style="position:absolute;left:26px;top:740px;width:1872px;height:1px;background:#d4d4d4"></div>
<div style="position:absolute;left:26px;top:760px;width:1872px;height:1px;background:#d4d4d4"></div>
<div style="position:absolute;left:26px;top:780px;width:1872px;height:1px;background:#d4d4d4"></div>
<div style="position:absolute;left:94px;top:501px;width:1px;height:275px;background:#d4d4d4"></div>
<div style="position:absolute;left:163px;top:501px;width:1px;height:275px;background:#d4d4d4"></div>
<div style="position:absolute;left:232px;top:501px;width:1px;height:275px;background:#d4d4d4"></div>
<div style="position:absolute;left:301px;top:501px;width:1px;height:275px;background:#d4d4d4"></div>
<div style="position:absolute;left:370px;top:501px;width:1px;height:275px;background:#d4d4d4"></div>
<div style="position:absolute;left:439px;top:501px;width:1px;height:275px;background:#d4d4d4"></div>
<div style="position:absolute;left:506px;top:501px;width:1px;height:275px;background:#d4d4d4"></div>
<div style="position:absolute;left:575px;top:501px;width:1px;height:275px;background:#d4d4d4"></div>
<div style="position:absolute;left:639px;top:501px;width:1px;height:275px;background:#d4d4d4"></div>
<div style="position:absolute;left:703px;top:501px;width:1px;height:275px;background:#d4d4d4"></div>
<div style="position:absolute;left:767px;top:501px;width:1px;height:275px;background:#d4d4d4"></div>
<div style="position:absolute;left:831px;top:501px;width:1px;height:275px;background:#d4d4d4"></div>
<div style="position:absolute;left:908px;top:501px;width:1px;height:275px;background:#d4d4d4"></div>
<div style="position:absolute;left:972px;top:501px;width:1px;height:275px;background:#d4d4d4"></div>
<div style="position:absolute;left:1042px;top:501px;width:1px;height:275px;background:#d4d4d4"></div>
<div style="position:absolute;left:1106px;top:501px;width:1px;height:275px;background:#d4d4d4"></div>
<div style="position:absolute;left:1170px;top:501px;width:1px;height:275px;background:#d4d4d4"></div>
<div style="position:absolute;left:1234px;top:501px;width:1px;height:275px;background:#d4d4d4"></div>
<div style="position:absolute;left:1298px;top:501px;width:1px;height:275px;background:#d4d4d4"></div>
<div style="position:absolute;left:1362px;top:501px;width:1px;height:275px;background:#d4d4d4"></div>
<div style="position:absolute;left:1426px;top:501px;width:1px;height:275px;background:#d4d4d4"></div>
<div style="position:absolute;left:1490px;top:501px;width:1px;height:275px;background:#d4d4d4"></div>
<div style="position:absolute;left:1554px;top:501px;width:1px;height:275px;background:#d4d4d4"></div>
<div style="position:absolute;left:1623px;top:501px;width:1px;height:275px;background:#d4d4d4"></div>
<div style="position:absolute;left:1690px;top:501px;width:1px;height:275px;background:#d4d4d4"></div>
<div style="position:absolute;left:1754px;top:501px;width:1px;height:275px;background:#d4d4d4"></div>
<div style="position:absolute;left:1835px;top:501px;width:1px;height:275px;background:#d4d4d4"></div>
<div style="position:absolute;left:1898px;top:501px;width:1px;height:275px;background:#d4d4d4"></div>
<div class="c b" style="left:26px;top:21px;width:69px;border-right:1px solid #000;border-bottom:1px solid #000">Bounce Charges</div>
<div class="c b" style="left:95px;top:21px;width:69px;border-right:1px solid #000;border-bottom:1px solid #000">Overdue Charges</div>
<div class="c b" style="left:164px;top:21px;width:69px;border-right:1px solid #000;border-bottom:1px solid #000">Other Charges</div>
<div class="c b" style="left:233px;top:21px;width:69px;border-right:1px solid #000;border-bottom:1px solid #000">Total Amount</div>
<div class="c b" style="left:302px;top:21px;width:69px;border-right:1px solid #000;border-bottom:1px solid #000">TOT_INST_PAID</div>
<div class="c b" style="left:371px;top:21px;width:69px;border-right:1px solid #000;border-bottom:1px solid #000">DPD</div>
<div class="c b" style="left:440px;top:21px;width:67px;border-right:1px solid #000;border-bottom:1px solid #000">NEW DPD</div>
<div class="c b" style="left:507px;top:21px;width:69px;border-right:1px solid #000;border-bottom:1px solid #000">Bucket</div>
<div class="c b" style="left:576px;top:21px;width:64px;border-right:1px solid #000;border-bottom:1px solid #000">DEALER_NAME</div>
<div class="c b" style="left:640px;top:21px;width:64px;border-right:1px solid #000;border-bottom:1px solid #000">DMA_NAME</div>
<div class="c b" style="left:704px;top:21px;width:64px;border-right:1px solid #000;border-bottom:1px solid #000">MODE_REPAY</div>
<div class="c b" style="left:768px;top:21px;width:64px;border-right:1px solid #000;border-bottom:1px solid #000">BRANCH_NAME</div>
<div class="c b" style="left:832px;top:21px;width:77px;border-right:1px solid #000;border-bottom:1px solid #000">MATURITY_DATE</div>
<div class="c b" style="left:909px;top:21px;width:64px;border-right:1px solid #000;border-bottom:1px solid #000">REG_NO</div>
<div class="c b" style="left:973px;top:21px;width:70px;border-right:1px solid #000;border-bottom:1px solid #000">DOB</div>
<div class="c b" style="left:1043px;top:21px;width:64px;border-right:1px solid #000;border-bottom:1px solid #000">Cust_Type</div>
<div class="c b" style="left:1107px;top:21px;width:64px;border-right:1px solid #000;border-bottom:1px solid #000">Pan_No</div>
<div class="c b" style="left:1171px;top:21px;width:64px;border-right:1px solid #000;border-bottom:1px solid #000">CUST_MAIL_ADD1</div>
<div class="c b" style="left:1235px;top:21px;width:64px;border-right:1px solid #000;border-bottom:1px solid #000">CUST_MAIL_ADD2</div>
<div class="c b" style="left:1299px;top:21px;width:64px;border-right:1px solid #000;border-bottom:1px solid #000">CUST_MAIL_ADD3</div>
<div class="c b" style="left:1363px;top:21px;width:64px;border-right:1px solid #000;border-bottom:1px solid #000">CUST_MAIL_ADD4</div>
<div class="c b" style="left:1427px;top:21px;width:64px;border-right:1px solid #000;border-bottom:1px solid #000">CUST_MAIL_CITY</div>
<div class="c b" style="left:1491px;top:21px;width:64px;border-right:1px solid #000;border-bottom:1px solid #000">CUST_MAIL_STATE</div>
<div class="c b" style="left:1555px;top:21px;width:69px;border-right:1px solid #000;border-bottom:1px solid #000">CUST_MAIL_PIN</div>
<div class="c b" style="left:1624px;top:21px;width:67px;border-right:1px solid #000;border-bottom:1px solid #000">CUST_MAIL_PHONE</div>
<div class="c b" style="left:1691px;top:21px;width:64px;border-right:1px solid #000;border-bottom:1px solid #000">CUST_MAIL_FAX</div>
<div class="c b" style="left:1755px;top:21px;width:81px;border-right:1px solid #000;border-bottom:1px solid #000">CUST_MOBILE</div>
<div class="c b" style="left:1836px;top:21px;width:63px;border-right:1px solid #c6c6c6;border-bottom:1px solid #000">ASSET_DESC</div>
<div style="position:absolute;left:25px;top:21px;width:1px;height:20px;background:#000"></div>
<div class="c r" style="left:26px;top:41px;width:69px;color:#000">7670</div>
<div class="c r" style="left:95px;top:41px;width:69px;color:#000">126110</div>
<div class="c r" style="left:164px;top:41px;width:69px;color:#000">0</div>
<div class="c r" style="left:233px;top:41px;width:69px;color:#000">1113915</div>
<div class="c r" style="left:302px;top:41px;width:69px;color:#000">13</div>
<div class="c r" style="left:371px;top:41px;width:69px;color:#000">386</div>
<div class="c r" style="left:507px;top:41px;width:69px;color:#000">13</div>
<div class="c" style="left:576px;top:41px;width:64px;color:#000"></div>
<div class="c" style="left:640px;top:41px;width:64px;color:#000">BHAVNA WHEELS</div>
<div class="c" style="left:704px;top:41px;width:64px;color:#000">A</div>
<div class="c" style="left:768px;top:41px;width:64px;color:#000">NAVI MUMBAI</div>
<div class="c" style="left:832px;top:41px;width:77px;color:#000;letter-spacing:0.5px">15/09/2025</div>
<div class="c" style="left:909px;top:41px;width:64px;color:#000">MH43BU4844</div>
<div class="c r" style="left:973px;top:41px;width:70px;color:#000;letter-spacing:0.5px">1/10/1979</div>
<div class="c" style="left:1043px;top:41px;width:64px;color:#000">E</div>
<div class="c" style="left:1107px;top:41px;width:64px;color:#000"></div>
<div class="c" style="left:1171px;top:41px;width:64px;color:#000">FLAT NO 104</div>
<div class="c" style="left:1235px;top:41px;width:64px;color:#000">FLAT NO 104</div>
<div class="c" style="left:1299px;top:41px;width:64px;color:#000">PL 55 B 67</div>
<div class="c" style="left:1363px;top:41px;width:128px;color:#000">KAMOTHE</div>
<div class="c" style="left:1491px;top:41px;width:64px;color:#000">NAVI MUMBAI</div>
<div class="c r" style="left:1555px;top:41px;width:69px;color:#000">410209</div>
<div class="c" style="left:1624px;top:41px;width:67px;color:#000"></div>
<div class="c" style="left:1691px;top:41px;width:64px;color:#000"></div>
<div class="c r" style="left:1755px;top:41px;width:81px;color:#000">9167912627</div>
<div class="c" style="left:1836px;top:41px;width:63px;color:#000">2.2L LIMO</div>
<div class="c r" style="left:26px;top:61px;width:69px;color:#000">12980</div>
<div class="c r" style="left:95px;top:61px;width:69px;color:#000">121995</div>
<div class="c r" style="left:164px;top:61px;width:69px;color:#000">0</div>
<div class="c r" style="left:233px;top:61px;width:69px;color:#000">793308</div>
<div class="c r" style="left:302px;top:61px;width:69px;color:#000">20</div>
<div class="c r" style="left:371px;top:61px;width:69px;color:#000">580</div>
<div class="c r" style="left:507px;top:61px;width:69px;color:#000">13</div>
<div class="c" style="left:576px;top:61px;width:64px;color:#000">SALASAR AUTO</div>
<div class="c" style="left:640px;top:61px;width:64px;color:#000">SALASAR AUTO</div>
<div class="c" style="left:704px;top:61px;width:64px;color:#000">A</div>
<div class="c" style="left:768px;top:61px;width:64px;color:#000">NAVI MUMBAI</div>
<div class="c r" style="left:832px;top:61px;width:77px;color:#000;letter-spacing:0.5px">5/4/2023</div>
<div class="c" style="left:909px;top:61px;width:64px;color:#000">MH46BE7712</div>
<div class="c r" style="left:973px;top:61px;width:70px;color:#000;letter-spacing:0.5px">9/9/1986</div>
<div class="c" style="left:1043px;top:61px;width:64px;color:#000">E</div>
<div class="c" style="left:1107px;top:61px;width:64px;color:#000"></div>
<div class="c" style="left:1171px;top:61px;width:64px;color:#000">FLAT 2303 A</div>
<div class="c" style="left:1235px;top:61px;width:64px;color:#000">FLAT 2303 A</div>
<div class="c" style="left:1299px;top:61px;width:192px;color:#000">27 RAANJANPAADHA KHARGHAR</div>
<div class="c" style="left:1491px;top:61px;width:64px;color:#000">NAVI MUMBAI</div>
<div class="c r" style="left:1555px;top:61px;width:69px;color:#000">410210</div>
<div class="c r" style="left:1624px;top:61px;width:67px;color:#000">21212121</div>
<div class="c" style="left:1691px;top:61px;width:64px;color:#000"></div>
<div class="c r" style="left:1755px;top:61px;width:81px;color:#000">9022608188</div>
<div class="c" style="left:1836px;top:61px;width:63px;color:#000">W9</div>
<div class="c r" style="left:26px;top:81px;width:69px;color:#000">12980</div>
<div class="c r" style="left:95px;top:81px;width:69px;color:#000">13686</div>
<div class="c r" style="left:164px;top:81px;width:69px;color:#000">0</div>
<div class="c r" style="left:233px;top:81px;width:69px;color:#000">125499</div>
<div class="c r" style="left:302px;top:81px;width:69px;color:#000">9</div>
<div class="c r" style="left:371px;top:81px;width:69px;color:#000">266</div>
<div class="c r" style="left:507px;top:81px;width:69px;color:#000">9</div>
<div class="c" style="left:576px;top:81px;width:64px;color:#000"></div>
<div class="c" style="left:640px;top:81px;width:64px;color:#000">MY CAR PUNE</div>
<div class="c" style="left:704px;top:81px;width:64px;color:#000">E</div>
<div class="c" style="left:768px;top:81px;width:64px;color:#000">THANE</div>
<div class="c" style="left:832px;top:81px;width:77px;color:#000;letter-spacing:0.5px">15/06/2027</div>
<div class="c" style="left:909px;top:81px;width:64px;color:#000">MH46BK8321</div>
<div class="c r" style="left:973px;top:81px;width:70px;color:#000;letter-spacing:0.5px">12/4/1987</div>
<div class="c" style="left:1043px;top:81px;width:64px;color:#000">W</div>
<div class="c" style="left:1107px;top:81px;width:64px;color:#000"></div>
<div class="c" style="left:1171px;top:81px;width:64px;color:#000">28 B 6 SAI KRUPA</div>
<div class="c" style="left:1235px;top:81px;width:64px;color:#000">28 B 6 SAI KRUPA</div>
<div class="c" style="left:1299px;top:81px;width:64px;color:#000">CHS SEC 12</div>
<div class="c" style="left:1363px;top:81px;width:64px;color:#000">THANE</div>
<div class="c" style="left:1427px;top:81px;width:64px;color:#000"></div>
<div class="c" style="left:1491px;top:81px;width:64px;color:#000">NAVI MUMBAI</div>
<div class="c r" style="left:1555px;top:81px;width:69px;color:#000">410210</div>
<div class="c" style="left:1624px;top:81px;width:67px;color:#000"></div>
<div class="c" style="left:1691px;top:81px;width:64px;color:#000"></div>
<div class="c r" style="left:1755px;top:81px;width:81px;color:#000">9082802905</div>
<div class="c" style="left:1836px;top:81px;width:63px;color:#000">Delta AT 1.2</div>
<div class="c r" style="left:26px;top:101px;width:69px;color:#000">13537</div>
<div class="c r" style="left:95px;top:101px;width:69px;color:#000">81014</div>
<div class="c r" style="left:164px;top:101px;width:69px;color:#000">0</div>
<div class="c r" style="left:233px;top:101px;width:69px;color:#000">404836</div>
<div class="c r" style="left:302px;top:101px;width:69px;color:#000">12</div>
<div class="c r" style="left:371px;top:101px;width:69px;color:#000">358</div>
<div class="c r" style="left:507px;top:101px;width:69px;color:#000">12</div>
<div class="c" style="left:576px;top:101px;width:64px;color:#000">SHARAYU TOYOTA</div>
<div class="c" style="left:640px;top:101px;width:64px;color:#000">BRANCH-0001</div>
<div class="c" style="left:704px;top:101px;width:64px;color:#000">A</div>
<div class="c" style="left:768px;top:101px;width:64px;color:#000">MUMBAI</div>
<div class="c" style="left:832px;top:101px;width:77px;color:#000;letter-spacing:0.5px">15/11/2022</div>
<div class="c" style="left:909px;top:101px;width:64px;color:#000">MH43BE6712</div>
<div class="c" style="left:973px;top:101px;width:70px;color:#000;letter-spacing:0.5px">17-02-1977</div>
<div class="c" style="left:1043px;top:101px;width:64px;color:#000">E</div>
<div class="c" style="left:1107px;top:101px;width:64px;color:#000"></div>
<div class="c" style="left:1171px;top:101px;width:64px;color:#000">CNL PARK</div>
<div class="c" style="left:1235px;top:101px;width:64px;color:#000">CNL PARK</div>
<div class="c" style="left:1299px;top:101px;width:64px;color:#000">C WING PLOT</div>
<div class="c" style="left:1363px;top:101px;width:128px;color:#000">KOPARKHAIRANE</div>
<div class="c" style="left:1491px;top:101px;width:64px;color:#000">NAVI MUMBAI</div>
<div class="c r" style="left:1555px;top:101px;width:69px;color:#000">400709</div>
<div class="c r" style="left:1624px;top:101px;width:67px;color:#000">21212121</div>
<div class="c" style="left:1691px;top:101px;width:64px;color:#000"></div>
<div class="c r" style="left:1755px;top:101px;width:81px;color:#000">9821543314</div>
<div class="c" style="left:1836px;top:101px;width:63px;color:#000">1.6 VTVT SX</div>
<div class="c r" style="left:26px;top:121px;width:69px;color:#000">14811</div>
<div class="c r" style="left:95px;top:121px;width:69px;color:#000">41145</div>
<div class="c r" style="left:164px;top:121px;width:69px;color:#000">0</div>
<div class="c r" style="left:233px;top:121px;width:69px;color:#000">298624</div>
<div class="c r" style="left:302px;top:121px;width:69px;color:#000">18</div>
<div class="c r" style="left:371px;top:121px;width:69px;color:#000">519</div>
<div class="c r" style="left:507px;top:121px;width:69px;color:#000">13</div>
<div class="c" style="left:576px;top:121px;width:64px;color:#000">MANTHAN MOTORS</div>
<div class="c" style="left:640px;top:121px;width:64px;color:#000">MANTHAN MOTORS</div>
<div class="c" style="left:704px;top:121px;width:64px;color:#000">A</div>
<div class="c" style="left:768px;top:121px;width:64px;color:#000">THANE</div>
<div class="c r" style="left:832px;top:121px;width:77px;color:#000;letter-spacing:0.5px">5/8/2024</div>
<div class="c" style="left:909px;top:121px;width:64px;color:#000">MH03BJ7456</div>
<div class="c r" style="left:973px;top:121px;width:70px;color:#000;letter-spacing:0.5px">12/6/1988</div>
<div class="c" style="left:1043px;top:121px;width:64px;color:#000">E</div>
<div class="c" style="left:1107px;top:121px;width:64px;color:#000"></div>
<div class="c" style="left:1171px;top:121px;width:64px;color:#000">SHOP NO 12</div>
<div class="c" style="left:1235px;top:121px;width:64px;color:#000">SHOP NO 12</div>
<div class="c" style="left:1299px;top:121px;width:64px;color:#000">MARUTI CHS</div>
<div class="c" style="left:1363px;top:121px;width:128px;color:#000">SECTOR 14 KALAMBOLI</div>
<div class="c" style="left:1491px;top:121px;width:64px;color:#000">NAVI MUMBAI</div>
<div class="c r" style="left:1555px;top:121px;width:69px;color:#000">410218</div>
<div class="c r" style="left:1624px;top:121px;width:67px;color:#000">21212121</div>
<div class="c" style="left:1691px;top:121px;width:64px;color:#000"></div>
<div class="c r" style="left:1755px;top:121px;width:81px;color:#000">8692978785</div>
<div class="c" style="left:1836px;top:121px;width:63px;color:#000">1.5 SVMT</div>
<div class="c r" style="left:26px;top:141px;width:69px;color:#000">12390</div>
<div class="c r" style="left:95px;top:141px;width:69px;color:#000">47710</div>
<div class="c r" style="left:164px;top:141px;width:69px;color:#000">0</div>
<div class="c r" style="left:233px;top:141px;width:69px;color:#000">327384</div>
<div class="c r" style="left:302px;top:141px;width:69px;color:#000">19</div>
<div class="c r" style="left:371px;top:141px;width:69px;color:#000">553</div>
<div class="c r" style="left:507px;top:141px;width:69px;color:#000">13</div>
<div class="c" style="left:576px;top:141px;width:64px;color:#000">HARE KRISHNA</div>
<div class="c" style="left:640px;top:141px;width:64px;color:#000">KRISH MOTORS</div>
<div class="c" style="left:704px;top:141px;width:64px;color:#000">A</div>
<div class="c" style="left:768px;top:141px;width:64px;color:#000">NAVI MUMBAI</div>
<div class="c r" style="left:832px;top:141px;width:77px;color:#000;letter-spacing:0.5px">1/10/2023</div>
<div class="c" style="left:909px;top:141px;width:64px;color:#000">MH46BE3712</div>
<div class="c r" style="left:973px;top:141px;width:70px;color:#000;letter-spacing:0.5px">6/3/1988</div>
<div class="c" style="left:1043px;top:141px;width:64px;color:#000">E</div>
<div class="c" style="left:1107px;top:141px;width:64px;color:#000"></div>
<div class="c" style="left:1171px;top:141px;width:64px;color:#000">FL A 303 SUNRISE</div>
<div class="c" style="left:1235px;top:141px;width:64px;color:#000">FL A 303 SUNRISE</div>
<div class="c" style="left:1299px;top:141px;width:64px;color:#000">PLOT 13 14</div>
<div class="c" style="left:1363px;top:141px;width:128px;color:#000">KHARGHAR</div>
<div class="c" style="left:1491px;top:141px;width:64px;color:#000">NAVI MUMBAI</div>
<div class="c r" style="left:1555px;top:141px;width:69px;color:#000">410210</div>
<div class="c r" style="left:1624px;top:141px;width:67px;color:#000">21212121</div>
<div class="c" style="left:1691px;top:141px;width:64px;color:#000"></div>
<div class="c r" style="left:1755px;top:141px;width:81px;color:#000">9967661106</div>
<div class="c" style="left:1836px;top:141px;width:63px;color:#000">1.5 D TITANIUM</div>
<div class="c b r" style="left:26px;top:161px;width:69px;color:#0000cc">12828</div>
<div class="c b r" style="left:95px;top:161px;width:69px;color:#0000cc">17148</div>
<div class="c b r" style="left:164px;top:161px;width:69px;color:#0000cc">0</div>
<div class="c b r" style="left:233px;top:161px;width:69px;color:#0000cc">154756</div>
<div class="c b r" style="left:302px;top:161px;width:69px;color:#0000cc">12</div>
<div class="c b r" style="left:371px;top:161px;width:69px;color:#0000cc">358</div>
<div class="c b r" style="left:507px;top:161px;width:69px;color:#0000cc">12</div>
<div class="c b" style="left:576px;top:161px;width:64px;color:#0000cc">MY CAR PVT</div>
<div class="c b" style="left:640px;top:161px;width:64px;color:#0000cc">MY CAR PVT</div>
<div class="c b" style="left:704px;top:161px;width:64px;color:#0000cc">E</div>
<div class="c b" style="left:768px;top:161px;width:64px;color:#0000cc">THANE</div>
<div class="c b" style="left:832px;top:161px;width:77px;color:#0000cc;letter-spacing:0.5px">15/05/2025</div>
<div class="c b" style="left:909px;top:161px;width:64px;color:#0000cc">MH04KD0912</div>
<div class="c b r" style="left:973px;top:161px;width:70px;color:#0000cc;letter-spacing:0.5px">5/6/1977</div>
<div class="c b" style="left:1043px;top:161px;width:64px;color:#0000cc">E</div>
<div class="c b" style="left:1107px;top:161px;width:64px;color:#0000cc"></div>
<div class="c b" style="left:1171px;top:161px;width:64px;color:#0000cc">B 33 3RD FLOOR</div>
<div class="c b" style="left:1235px;top:161px;width:64px;color:#0000cc">B 33 3RD FLOOR</div>
<div class="c b" style="left:1299px;top:161px;width:64px;color:#0000cc">SHIVAJI NAGAR</div>
<div class="c b" style="left:1363px;top:161px;width:64px;color:#0000cc">MUMBRA</div>
<div class="c b" style="left:1427px;top:161px;width:64px;color:#0000cc"></div>
<div class="c b" style="left:1491px;top:161px;width:64px;color:#0000cc">THANE</div>
<div class="c b r" style="left:1555px;top:161px;width:69px;color:#0000cc">400612</div>
<div class="c b" style="left:1624px;top:161px;width:67px;color:#0000cc"></div>
<div class="c b" style="left:1691px;top:161px;width:64px;color:#0000cc"></div>
<div class="c b r" style="left:1755px;top:161px;width:81px;color:#0000cc">7738762448</div>
<div class="c b" style="left:1836px;top:161px;width:63px;color:#0000cc">5 STR WITH</div>
<div class="c r" style="left:26px;top:181px;width:69px;color:#000">10620</div>
<div class="c r" style="left:95px;top:181px;width:69px;color:#000">24253</div>
<div class="c r" style="left:164px;top:181px;width:69px;color:#000">0</div>
<div class="c r" style="left:233px;top:181px;width:69px;color:#000">180293</div>
<div class="c r" style="left:302px;top:181px;width:69px;color:#000">15</div>
<div class="c r" style="left:371px;top:181px;width:69px;color:#000">453</div>
<div class="c r" style="left:507px;top:181px;width:69px;color:#000">13</div>
<div class="c" style="left:576px;top:181px;width:64px;color:#000">BENCHMARK</div>
<div class="c" style="left:640px;top:181px;width:64px;color:#000">BRANCH-1001</div>
<div class="c" style="left:704px;top:181px;width:64px;color:#000">A</div>
<div class="c" style="left:768px;top:181px;width:64px;color:#000">NAVI MUMBAI</div>
<div class="c r" style="left:832px;top:181px;width:77px;color:#000;letter-spacing:0.5px">10/4/2025</div>
<div class="c" style="left:909px;top:181px;width:64px;color:#000">MH43BN8123</div>
<div class="c r" style="left:973px;top:181px;width:70px;color:#000;letter-spacing:0.5px">9/9/1986</div>
<div class="c" style="left:1043px;top:181px;width:64px;color:#000">E</div>
<div class="c" style="left:1107px;top:181px;width:64px;color:#000"></div>
<div class="c" style="left:1171px;top:181px;width:64px;color:#000">B 2303 YASH</div>
<div class="c" style="left:1235px;top:181px;width:64px;color:#000">B 2303 YASH</div>
<div class="c" style="left:1299px;top:181px;width:64px;color:#000">CHS SECTOR</div>
<div class="c" style="left:1363px;top:181px;width:128px;color:#000">PAADHA CENTRAL PARK</div>
<div class="c" style="left:1491px;top:181px;width:64px;color:#000">NAVI MUMBAI</div>
<div class="c r" style="left:1555px;top:181px;width:69px;color:#000">410210</div>
<div class="c" style="left:1624px;top:181px;width:67px;color:#000"></div>
<div class="c" style="left:1691px;top:181px;width:64px;color:#000"></div>
<div class="c r" style="left:1755px;top:181px;width:81px;color:#000">9833066877</div>
<div class="c" style="left:1836px;top:181px;width:63px;color:#000">RXT O</div>
<div class="c b r" style="left:26px;top:201px;width:69px;color:#ff00ff">11800</div>
<div class="c b r" style="left:95px;top:201px;width:69px;color:#ff00ff">12341</div>
<div class="c b r" style="left:164px;top:201px;width:69px;color:#ff00ff">0</div>
<div class="c b r" style="left:233px;top:201px;width:69px;color:#ff00ff">127870</div>
<div class="c b r" style="left:302px;top:201px;width:69px;color:#ff00ff">10</div>
<div class="c b r" style="left:371px;top:201px;width:69px;color:#ff00ff">297</div>
<div class="c b r" style="left:507px;top:201px;width:69px;color:#ff00ff">10</div>
<div class="c b" style="left:576px;top:201px;width:64px;color:#ff00ff"></div>
<div class="c b" style="left:640px;top:201px;width:64px;color:#ff00ff">SIMRAN MOTORS</div>
<div class="c b" style="left:704px;top:201px;width:64px;color:#ff00ff">E</div>
<div class="c b" style="left:768px;top:201px;width:64px;color:#ff00ff">NAVI MUMBAI</div>
<div class="c b" style="left:832px;top:201px;width:77px;color:#ff00ff;letter-spacing:0.5px">15/10/2024</div>
<div class="c b" style="left:909px;top:201px;width:64px;color:#ff00ff">MH46BK8412</div>
<div class="c b" style="left:973px;top:201px;width:70px;color:#ff00ff;letter-spacing:0.5px">20-11-1982</div>
<div class="c b" style="left:1043px;top:201px;width:64px;color:#ff00ff">E</div>
<div class="c b" style="left:1107px;top:201px;width:64px;color:#ff00ff"></div>
<div class="c" style="left:1171px;top:201px;width:64px;color:#000">03 GR PLOT</div>
<div class="c b" style="left:1235px;top:201px;width:64px;color:#ff00ff">03 GR PLOT</div>
<div class="c b" style="left:1299px;top:201px;width:64px;color:#ff00ff">KAMOTHE SEC</div>
<div class="c b" style="left:1363px;top:201px;width:128px;color:#ff00ff">NAVI MUMBAI</div>
<div class="c b" style="left:1491px;top:201px;width:64px;color:#ff00ff">NAVI MUMBAI</div>
<div class="c b r" style="left:1555px;top:201px;width:69px;color:#ff00ff">410209</div>
<div class="c b r" style="left:1624px;top:201px;width:67px;color:#ff00ff">21212121</div>
<div class="c b" style="left:1691px;top:201px;width:64px;color:#ff00ff"></div>
<div class="c b r" style="left:1755px;top:201px;width:81px;color:#ff00ff">8652643645</div>
<div class="c b" style="left:1836px;top:201px;width:63px;color:#ff00ff">VXi CNG</div>
<div class="c b r" style="left:26px;top:221px;width:69px;color:#0000cc">12390</div>
<div class="c b r" style="left:95px;top:221px;width:69px;color:#0000cc">24821</div>
<div class="c b r" style="left:164px;top:221px;width:69px;color:#0000cc">0</div>
<div class="c b r" style="left:233px;top:221px;width:69px;color:#0000cc">145762.32</div>
<div class="c b r" style="left:302px;top:221px;width:69px;color:#0000cc">9</div>
<div class="c b r" style="left:371px;top:221px;width:69px;color:#0000cc">266</div>
<div class="c b r" style="left:507px;top:221px;width:69px;color:#0000cc">9</div>
<div class="c b" style="left:576px;top:221px;width:64px;color:#0000cc">PASCO AUTO</div>
<div class="c b" style="left:640px;top:221px;width:64px;color:#0000cc">BRANCH-1001</div>
<div class="c b" style="left:704px;top:221px;width:64px;color:#0000cc">A</div>
<div class="c b" style="left:768px;top:221px;width:64px;color:#0000cc">MUMBAI</div>
<div class="c b" style="left:832px;top:221px;width:77px;color:#0000cc;letter-spacing:0.5px">15/02/2024</div>
<div class="c b" style="left:909px;top:221px;width:64px;color:#0000cc">HR28H9723</div>
<div class="c b r" style="left:973px;top:221px;width:70px;color:#0000cc;letter-spacing:0.5px">8/1/1995</div>
<div class="c b" style="left:1043px;top:221px;width:64px;color:#0000cc">E</div>
<div class="c b" style="left:1107px;top:221px;width:64px;color:#0000cc"></div>
<div class="c" style="left:1171px;top:221px;width:64px;color:#000">ROOM NO 5</div>
<div class="c b" style="left:1235px;top:221px;width:64px;color:#0000cc">ROOM NO 5</div>
<div class="c b" style="left:1299px;top:221px;width:64px;color:#0000cc">MUMBAI</div>
<div class="c b" style="left:1363px;top:221px;width:64px;color:#0000cc">MUMBRA</div>
<div class="c b" style="left:1427px;top:221px;width:64px;color:#0000cc"></div>
<div class="c b" style="left:1491px;top:221px;width:64px;color:#0000cc">THANE</div>
<div class="c b r" style="left:1555px;top:221px;width:69px;color:#0000cc">400612</div>
<div class="c b r" style="left:1624px;top:221px;width:67px;color:#0000cc">67474507</div>
<div class="c b" style="left:1691px;top:221px;width:64px;color:#0000cc"></div>
<div class="c b r" style="left:1755px;top:221px;width:81px;color:#0000cc">9987000526</div>
<div class="c b" style="left:1836px;top:221px;width:63px;color:#0000cc">VDI</div>
<div class="c r" style="left:26px;top:241px;width:69px;color:#000">12980</div>
<div class="c r" style="left:95px;top:241px;width:69px;color:#000">20881</div>
<div class="c r" style="left:164px;top:241px;width:69px;color:#000">0</div>
<div class="c r" style="left:233px;top:241px;width:69px;color:#000">143998</div>
<div class="c r" style="left:302px;top:241px;width:69px;color:#000">19</div>
<div class="c r" style="left:371px;top:241px;width:69px;color:#000">575</div>
<div class="c r" style="left:507px;top:241px;width:69px;color:#000">13</div>
<div class="c" style="left:576px;top:241px;width:64px;color:#000">ETCO MOTORS</div>
<div class="c" style="left:640px;top:241px;width:64px;color:#000">AUTOBAHN</div>
<div class="c" style="left:704px;top:241px;width:64px;color:#000">A</div>
<div class="c" style="left:768px;top:241px;width:64px;color:#000">PANVEL</div>
<div class="c r" style="left:832px;top:241px;width:77px;color:#000;letter-spacing:0.5px">10/9/2027</div>
<div class="c" style="left:909px;top:241px;width:64px;color:#000">MH46BQ3412</div>
<div class="c r" style="left:973px;top:241px;width:70px;color:#000;letter-spacing:0.5px">5/11/1986</div>
<div class="c" style="left:1043px;top:241px;width:64px;color:#000">E</div>
<div class="c" style="left:1107px;top:241px;width:64px;color:#000"></div>
<div class="c" style="left:1171px;top:241px;width:64px;color:#000">B NO 1E F</div>
<div class="c" style="left:1235px;top:241px;width:64px;color:#000">B NO 1E F</div>
<div class="c" style="left:1299px;top:241px;width:64px;color:#000">GREENS KHARGHAR</div>
<div class="c" style="left:1363px;top:241px;width:64px;color:#000">PANVEL</div>
<div class="c" style="left:1427px;top:241px;width:64px;color:#000"></div>
<div class="c" style="left:1491px;top:241px;width:64px;color:#000">PANVEL</div>
<div class="c r" style="left:1555px;top:241px;width:69px;color:#000">410206</div>
<div class="c r" style="left:1624px;top:241px;width:67px;color:#000">21212121</div>
<div class="c" style="left:1691px;top:241px;width:64px;color:#000"></div>
<div class="c r" style="left:1755px;top:241px;width:81px;color:#000">7043595929</div>
<div class="c" style="left:1836px;top:241px;width:63px;color:#000">S</div>
<div class="c r" style="left:26px;top:261px;width:69px;color:#000">11523</div>
<div class="c r" style="left:95px;top:261px;width:69px;color:#000">17738</div>
<div class="c r" style="left:164px;top:261px;width:69px;color:#000">0</div>
<div class="c r" style="left:233px;top:261px;width:69px;color:#000">161523</div>
<div class="c r" style="left:302px;top:261px;width:69px;color:#000">13</div>
<div class="c r" style="left:371px;top:261px;width:69px;color:#000">386</div>
<div class="c r" style="left:507px;top:261px;width:69px;color:#000">13</div>
<div class="c" style="left:576px;top:261px;width:64px;color:#000">MAHARASHTRA</div>
<div class="c" style="left:640px;top:261px;width:64px;color:#000">MAHARASHTRA</div>
<div class="c" style="left:704px;top:261px;width:64px;color:#000">E</div>
<div class="c" style="left:768px;top:261px;width:64px;color:#000">MUMBAI</div>
<div class="c" style="left:832px;top:261px;width:77px;color:#000;letter-spacing:0.5px">15/06/2024</div>
<div class="c" style="left:909px;top:261px;width:64px;color:#000">MH40AC9123</div>
<div class="c r" style="left:973px;top:261px;width:70px;color:#000;letter-spacing:0.5px">1/1/1986</div>
<div class="c" style="left:1043px;top:261px;width:64px;color:#000">E</div>
<div class="c" style="left:1107px;top:261px;width:64px;color:#000"></div>
<div class="c" style="left:1171px;top:261px;width:64px;color:#000">FLAT NO 5</div>
<div class="c" style="left:1235px;top:261px;width:64px;color:#000">FLAT NO 5</div>
<div class="c" style="left:1299px;top:261px;width:192px;color:#000">58 SEC 17 ULWE NAVI MUMBAI</div>
<div class="c" style="left:1491px;top:261px;width:64px;color:#000">PANVEL</div>
<div class="c r" style="left:1555px;top:261px;width:69px;color:#000">410206</div>
<div class="c r" style="left:1624px;top:261px;width:67px;color:#000">21212121</div>
<div class="c" style="left:1691px;top:261px;width:64px;color:#000"></div>
<div class="c r" style="left:1755px;top:261px;width:81px;color:#000">9136644042</div>
<div class="c" style="left:1836px;top:261px;width:63px;color:#000">VDI BS IV</div>
<div class="c r" style="left:26px;top:281px;width:69px;color:#000">11164</div>
<div class="c r" style="left:95px;top:281px;width:69px;color:#000">62477</div>
<div class="c r" style="left:164px;top:281px;width:69px;color:#000">1888</div>
<div class="c r" style="left:233px;top:281px;width:69px;color:#000">309166</div>
<div class="c r" style="left:302px;top:281px;width:69px;color:#000">23</div>
<div class="c r" style="left:371px;top:281px;width:69px;color:#000">675</div>
<div class="c r" style="left:507px;top:281px;width:69px;color:#000">13</div>
<div class="c" style="left:576px;top:281px;width:64px;color:#000">SIMRAN MOTORS</div>
<div class="c" style="left:640px;top:281px;width:64px;color:#000">SIMRAN MOTORS</div>
<div class="c" style="left:704px;top:281px;width:64px;color:#000">S</div>
<div class="c" style="left:768px;top:281px;width:64px;color:#000">NAVI MUMBAI</div>
<div class="c r" style="left:832px;top:281px;width:77px;color:#000;letter-spacing:0.5px">1/6/2023</div>
<div class="c" style="left:909px;top:281px;width:64px;color:#000">MH46BE0123</div>
<div class="c r" style="left:973px;top:281px;width:70px;color:#000;letter-spacing:0.5px">10/5/1991</div>
<div class="c" style="left:1043px;top:281px;width:64px;color:#000">E</div>
<div class="c" style="left:1107px;top:281px;width:64px;color:#000"></div>
<div class="c" style="left:1171px;top:281px;width:64px;color:#000">H NO 52 B</div>
<div class="c" style="left:1235px;top:281px;width:64px;color:#000">H NO 52 B</div>
<div class="c" style="left:1299px;top:281px;width:64px;color:#000">NR HANUMAN</div>
<div class="c r" style="left:1363px;top:281px;width:64px;color:#000">410203</div>
<div class="c" style="left:1427px;top:281px;width:64px;color:#000"></div>
<div class="c" style="left:1491px;top:281px;width:64px;color:#000">PANVEL</div>
<div class="c r" style="left:1555px;top:281px;width:69px;color:#000">410206</div>
<div class="c r" style="left:1624px;top:281px;width:67px;color:#000">21212121</div>
<div class="c" style="left:1691px;top:281px;width:64px;color:#000"></div>
<div class="c r" style="left:1755px;top:281px;width:81px;color:#000">9767562529</div>
<div class="c" style="left:1836px;top:281px;width:63px;color:#000">VXI AMT</div>
<div class="c r" style="left:26px;top:301px;width:69px;color:#000">10565</div>
<div class="c r" style="left:95px;top:301px;width:69px;color:#000">17918</div>
<div class="c r" style="left:164px;top:301px;width:69px;color:#000">0</div>
<div class="c r" style="left:233px;top:301px;width:69px;color:#000">146456</div>
<div class="c r" style="left:302px;top:301px;width:69px;color:#000">15</div>
<div class="c r" style="left:371px;top:301px;width:69px;color:#000">448</div>
<div class="c r" style="left:507px;top:301px;width:69px;color:#000">13</div>
<div class="c" style="left:576px;top:301px;width:64px;color:#000">ETCO MOTORS</div>
<div class="c" style="left:640px;top:301px;width:64px;color:#000">AUTOBAHN</div>
<div class="c" style="left:704px;top:301px;width:64px;color:#000">E</div>
<div class="c" style="left:768px;top:301px;width:64px;color:#000">NAVI MUMBAI</div>
<div class="c" style="left:832px;top:301px;width:77px;color:#000;letter-spacing:0.5px">15/04/2024</div>
<div class="c" style="left:909px;top:301px;width:64px;color:#000">MH06BU4123</div>
<div class="c" style="left:973px;top:301px;width:70px;color:#000;letter-spacing:0.5px">22-12-1975</div>
<div class="c" style="left:1043px;top:301px;width:64px;color:#000">S</div>
<div class="c" style="left:1107px;top:301px;width:64px;color:#000"></div>
<div class="c" style="left:1171px;top:301px;width:64px;color:#000">HOUSE NO 12</div>
<div class="c" style="left:1235px;top:301px;width:64px;color:#000">HOUSE NO 12</div>
<div class="c" style="left:1299px;top:301px;width:64px;color:#000">MADHALI</div>
<div class="c" style="left:1363px;top:301px;width:64px;color:#000">RAIGARH</div>
<div class="c" style="left:1427px;top:301px;width:64px;color:#000"></div>
<div class="c" style="left:1491px;top:301px;width:64px;color:#000">MAHAD</div>
<div class="c r" style="left:1555px;top:301px;width:69px;color:#000">402301</div>
<div class="c r" style="left:1624px;top:301px;width:67px;color:#000">11111111</div>
<div class="c" style="left:1691px;top:301px;width:64px;color:#000"></div>
<div class="c r" style="left:1755px;top:301px;width:81px;color:#000">9172832279</div>
<div class="c" style="left:1836px;top:301px;width:63px;color:#000">T (O)</div>
<div class="c r" style="left:26px;top:321px;width:69px;color:#000">20650</div>
<div class="c r" style="left:95px;top:321px;width:69px;color:#000">36008</div>
<div class="c r" style="left:164px;top:321px;width:69px;color:#000">0</div>
<div class="c r" style="left:233px;top:321px;width:69px;color:#000">174218</div>
<div class="c r" style="left:302px;top:321px;width:69px;color:#000">11</div>
<div class="c r" style="left:371px;top:321px;width:69px;color:#000">332</div>
<div class="c r" style="left:507px;top:321px;width:69px;color:#000">12</div>
<div class="c" style="left:576px;top:321px;width:64px;color:#000"></div>
<div class="c" style="left:640px;top:321px;width:64px;color:#000">SWASTIK (N)</div>
<div class="c" style="left:704px;top:321px;width:64px;color:#000">E</div>
<div class="c" style="left:768px;top:321px;width:64px;color:#000">NAVI MUMBAI</div>
<div class="c r" style="left:832px;top:321px;width:77px;color:#000;letter-spacing:0.5px">10/8/2023</div>
<div class="c" style="left:909px;top:321px;width:64px;color:#000">MH46BK5812</div>
<div class="c" style="left:973px;top:321px;width:70px;color:#000;letter-spacing:0.5px">21-04-1994</div>
<div class="c" style="left:1043px;top:321px;width:64px;color:#000">E</div>
<div class="c" style="left:1107px;top:321px;width:64px;color:#000"></div>
<div class="c" style="left:1171px;top:321px;width:64px;color:#000">102 SHRI SAI</div>
<div class="c" style="left:1235px;top:321px;width:64px;color:#000">102 SHRI SAI</div>
<div class="c" style="left:1299px;top:321px;width:64px;color:#000">PLOT NO 3</div>
<div class="c" style="left:1363px;top:321px;width:128px;color:#000">NEW PANVEL</div>
<div class="c" style="left:1491px;top:321px;width:64px;color:#000">PANVEL</div>
<div class="c r" style="left:1555px;top:321px;width:69px;color:#000">410206</div>
<div class="c" style="left:1624px;top:321px;width:67px;color:#000"></div>
<div class="c" style="left:1691px;top:321px;width:64px;color:#000"></div>
<div class="c r" style="left:1755px;top:321px;width:81px;color:#000">8108793396</div>
<div class="c" style="left:1836px;top:321px;width:63px;color:#000">5 STR</div>
<div class="c r" style="left:26px;top:341px;width:69px;color:#000">16266</div>
<div class="c r" style="left:95px;top:341px;width:69px;color:#000">26143</div>
<div class="c r" style="left:164px;top:341px;width:69px;color:#000">0</div>
<div class="c r" style="left:233px;top:341px;width:69px;color:#000">145567</div>
<div class="c r" style="left:302px;top:341px;width:69px;color:#000">11</div>
<div class="c r" style="left:371px;top:341px;width:69px;color:#000">311</div>
<div class="c r" style="left:507px;top:341px;width:69px;color:#000">11</div>
<div class="c" style="left:576px;top:341px;width:64px;color:#000">AUTOMOTIVE</div>
<div class="c" style="left:640px;top:341px;width:64px;color:#000">AUTOMOTIVE</div>
<div class="c" style="left:704px;top:341px;width:64px;color:#000">A</div>
<div class="c" style="left:768px;top:341px;width:64px;color:#000">PANVEL</div>
<div class="c r" style="left:832px;top:341px;width:77px;color:#000;letter-spacing:0.5px">1/12/2023</div>
<div class="c" style="left:909px;top:341px;width:64px;color:#000">MH46BE8512</div>
<div class="c r" style="left:973px;top:341px;width:70px;color:#000;letter-spacing:0.5px">1/6/1982</div>
<div class="c" style="left:1043px;top:341px;width:64px;color:#000">E</div>
<div class="c" style="left:1107px;top:341px;width:64px;color:#000"></div>
<div class="c" style="left:1171px;top:341px;width:64px;color:#000">HOUSE NO 45</div>
<div class="c" style="left:1235px;top:341px;width:64px;color:#000">HOUSE NO 45</div>
<div class="c" style="left:1299px;top:341px;width:64px;color:#000">AT BELPADA</div>
<div class="c" style="left:1363px;top:341px;width:128px;color:#000">TAL PANVEL</div>
<div class="c" style="left:1491px;top:341px;width:64px;color:#000">PANVEL</div>
<div class="c r" style="left:1555px;top:341px;width:69px;color:#000">410206</div>
<div class="c r" style="left:1624px;top:341px;width:67px;color:#000">21212121</div>
<div class="c" style="left:1691px;top:341px;width:64px;color:#000"></div>
<div class="c r" style="left:1755px;top:341px;width:81px;color:#000">8425006907</div>
<div class="c" style="left:1836px;top:341px;width:63px;color:#000">VXI CNG</div>
<div class="c r" style="left:26px;top:361px;width:69px;color:#000">7080</div>
<div class="c r" style="left:95px;top:361px;width:69px;color:#000">6101</div>
<div class="c r" style="left:164px;top:361px;width:69px;color:#000">0</div>
<div class="c r" style="left:233px;top:361px;width:69px;color:#000">84241</div>
<div class="c r" style="left:302px;top:361px;width:69px;color:#000">7</div>
<div class="c r" style="left:371px;top:361px;width:69px;color:#000">210</div>
<div class="c r" style="left:507px;top:361px;width:69px;color:#000">7</div>
<div class="c" style="left:576px;top:361px;width:64px;color:#000">AUTOMOTIVE</div>
<div class="c" style="left:640px;top:361px;width:64px;color:#000">AUTOMOTIVE</div>
<div class="c" style="left:704px;top:361px;width:64px;color:#000">A</div>
<div class="c" style="left:768px;top:361px;width:64px;color:#000">PANVEL</div>
<div class="c r" style="left:832px;top:361px;width:77px;color:#000;letter-spacing:0.5px">10/11/2023</div>
<div class="c" style="left:909px;top:361px;width:64px;color:#000">MH46BE9012</div>
<div class="c" style="left:973px;top:361px;width:70px;color:#000;letter-spacing:0.5px">24-02-1992</div>
<div class="c" style="left:1043px;top:361px;width:64px;color:#000">E</div>
<div class="c" style="left:1107px;top:361px;width:64px;color:#000"></div>
<div class="c" style="left:1171px;top:361px;width:64px;color:#000">FLAT NO 5</div>
<div class="c" style="left:1235px;top:361px;width:64px;color:#000">FLAT NO 5</div>
<div class="c" style="left:1299px;top:361px;width:64px;color:#000">SATYAM MHADA</div>
<div class="c" style="left:1363px;top:361px;width:128px;color:#000">SECTOR 18 ULWE</div>
<div class="c" style="left:1491px;top:361px;width:64px;color:#000">PANVEL</div>
<div class="c r" style="left:1555px;top:361px;width:69px;color:#000">410206</div>
<div class="c r" style="left:1624px;top:361px;width:67px;color:#000">21212121</div>
<div class="c" style="left:1691px;top:361px;width:64px;color:#000"></div>
<div class="c r" style="left:1755px;top:361px;width:81px;color:#000">8104043582</div>
<div class="c" style="left:1836px;top:361px;width:63px;color:#000">ZXI PLUS</div>
<div class="c r" style="left:26px;top:381px;width:69px;color:#000">6490</div>
<div class="c r" style="left:95px;top:381px;width:69px;color:#000">13302</div>
<div class="c r" style="left:164px;top:381px;width:69px;color:#000">0</div>
<div class="c r" style="left:233px;top:381px;width:69px;color:#000">142285</div>
<div class="c r" style="left:302px;top:381px;width:69px;color:#000">11</div>
<div class="c r" style="left:371px;top:381px;width:69px;color:#000">327</div>
<div class="c r" style="left:507px;top:381px;width:69px;color:#000">11</div>
<div class="c" style="left:576px;top:381px;width:64px;color:#000">A K GANDHI</div>
<div class="c" style="left:640px;top:381px;width:64px;color:#000">SHREE GANESH</div>
<div class="c" style="left:704px;top:381px;width:64px;color:#000">A</div>
<div class="c" style="left:768px;top:381px;width:64px;color:#000">THANE</div>
<div class="c" style="left:832px;top:381px;width:77px;color:#000;letter-spacing:0.5px">15/03/2023</div>
<div class="c" style="left:909px;top:381px;width:64px;color:#000"></div>
<div class="c" style="left:973px;top:381px;width:70px;color:#000;letter-spacing:0.5px">30-05-1968</div>
<div class="c" style="left:1043px;top:381px;width:64px;color:#000">S</div>
<div class="c" style="left:1107px;top:381px;width:64px;color:#000"></div>
<div class="c" style="left:1171px;top:381px;width:64px;color:#000">PLOT 5130</div>
<div class="c" style="left:1235px;top:381px;width:64px;color:#000">PLOT 5130</div>
<div class="c" style="left:1299px;top:381px;width:64px;color:#000">CIDCO COLONY</div>
<div class="c" style="left:1363px;top:381px;width:128px;color:#000">NEW PANVEL</div>
<div class="c" style="left:1491px;top:381px;width:64px;color:#000">NAVI MUMBAI</div>
<div class="c r" style="left:1555px;top:381px;width:69px;color:#000">410209</div>
<div class="c r" style="left:1624px;top:381px;width:67px;color:#000">21212121</div>
<div class="c" style="left:1691px;top:381px;width:64px;color:#000"></div>
<div class="c r" style="left:1755px;top:381px;width:81px;color:#000">9867443873</div>
<div class="c" style="left:1836px;top:381px;width:63px;color:#000">THUNDER</div>
<div class="c r" style="left:26px;top:401px;width:69px;color:#000">9410</div>
<div class="c r" style="left:95px;top:401px;width:69px;color:#000">72829</div>
<div class="c r" style="left:164px;top:401px;width:69px;color:#000">944</div>
<div class="c r" style="left:233px;top:401px;width:69px;color:#000">321396.5</div>
<div class="c r" style="left:302px;top:401px;width:69px;color:#000">13</div>
<div class="c r" style="left:371px;top:401px;width:69px;color:#000">492</div>
<div class="c r" style="left:507px;top:401px;width:69px;color:#000">13</div>
<div class="c" style="left:576px;top:401px;width:64px;color:#000"></div>
<div class="c" style="left:640px;top:401px;width:64px;color:#000">JMD MARKETING</div>
<div class="c" style="left:704px;top:401px;width:64px;color:#000">S</div>
<div class="c" style="left:768px;top:401px;width:64px;color:#000">NAVI MUMBAI</div>
<div class="c r" style="left:832px;top:401px;width:77px;color:#000;letter-spacing:0.5px">1/11/2021</div>
<div class="c" style="left:909px;top:401px;width:64px;color:#000">MH46AU1234</div>
<div class="c r" style="left:973px;top:401px;width:70px;color:#000;letter-spacing:0.5px">12/9/1992</div>
<div class="c" style="left:1043px;top:401px;width:64px;color:#000">E</div>
<div class="c" style="left:1107px;top:401px;width:64px;color:#000"></div>
<div class="c" style="left:1171px;top:401px;width:64px;color:#000">FLAT NO A 12</div>
<div class="c" style="left:1235px;top:401px;width:64px;color:#000">FLAT NO A 12</div>
<div class="c" style="left:1299px;top:401px;width:64px;color:#000">SHREE KRISHNA</div>
<div class="c" style="left:1363px;top:401px;width:128px;color:#000">135 13 NAVI MUMBAI</div>
<div class="c" style="left:1491px;top:401px;width:64px;color:#000">NAVI MUMBAI</div>
<div class="c r" style="left:1555px;top:401px;width:69px;color:#000">410210</div>
<div class="c r" style="left:1624px;top:401px;width:67px;color:#000">21212121</div>
<div class="c" style="left:1691px;top:401px;width:64px;color:#000"></div>
<div class="c r" style="left:1755px;top:401px;width:81px;color:#000">8655527413</div>
<div class="c" style="left:1836px;top:401px;width:63px;color:#000">STYLE 1.5 T</div>
<div class="c b r" style="left:26px;top:421px;width:69px;color:#ff00ff">27082</div>
<div class="c b r" style="left:95px;top:421px;width:69px;color:#ff00ff">58718</div>
<div class="c b r" style="left:164px;top:421px;width:69px;color:#ff00ff">0</div>
<div class="c b r" style="left:233px;top:421px;width:69px;color:#ff00ff">265724</div>
<div class="c b r" style="left:302px;top:421px;width:69px;color:#ff00ff">19</div>
<div class="c b r" style="left:371px;top:421px;width:69px;color:#ff00ff">553</div>
<div class="c b r" style="left:507px;top:421px;width:69px;color:#ff00ff">13</div>
<div class="c b" style="left:576px;top:421px;width:64px;color:#ff00ff">FORTUNE CARS</div>
<div class="c b" style="left:640px;top:421px;width:64px;color:#ff00ff">MODI MOTORS</div>
<div class="c b" style="left:704px;top:421px;width:64px;color:#ff00ff">A</div>
<div class="c b" style="left:768px;top:421px;width:64px;color:#ff00ff">NAVI MUMBAI</div>
<div class="c b r" style="left:832px;top:421px;width:77px;color:#ff00ff;letter-spacing:0.5px">1/9/2022</div>
<div class="c b" style="left:909px;top:421px;width:64px;color:#ff00ff">MH46BA7123</div>
<div class="c b" style="left:973px;top:421px;width:70px;color:#ff00ff;letter-spacing:0.5px">29-04-1982</div>
<div class="c b" style="left:1043px;top:421px;width:64px;color:#ff00ff">S</div>
<div class="c b" style="left:1107px;top:421px;width:64px;color:#ff00ff"></div>
<div class="c b" style="left:1171px;top:421px;width:64px;color:#ff00ff">10 FLAT NO</div>
<div class="c b" style="left:1235px;top:421px;width:64px;color:#ff00ff">10 FLAT NO</div>
<div class="c b" style="left:1299px;top:421px;width:64px;color:#ff00ff">SATPANTH</div>
<div class="c b" style="left:1363px;top:421px;width:128px;color:#ff00ff">NAVI MUMBAI</div>
<div class="c b" style="left:1491px;top:421px;width:64px;color:#ff00ff">PANVEL</div>
<div class="c b r" style="left:1555px;top:421px;width:69px;color:#ff00ff">410206</div>
<div class="c b r" style="left:1624px;top:421px;width:67px;color:#ff00ff">21212121</div>
<div class="c b" style="left:1691px;top:421px;width:64px;color:#ff00ff"></div>
<div class="c b r" style="left:1755px;top:421px;width:81px;color:#ff00ff">7021421043</div>
<div class="c b" style="left:1836px;top:421px;width:63px;color:#ff00ff">XE 1.05 D</div>
<div class="c r" style="left:26px;top:441px;width:69px;color:#000">9440</div>
<div class="c r" style="left:95px;top:441px;width:69px;color:#000">20809</div>
<div class="c r" style="left:164px;top:441px;width:69px;color:#000">0</div>
<div class="c r" style="left:233px;top:441px;width:69px;color:#000">181947</div>
<div class="c r" style="left:302px;top:441px;width:69px;color:#000">12</div>
<div class="c r" style="left:371px;top:441px;width:69px;color:#000">363</div>
<div class="c r" style="left:507px;top:441px;width:69px;color:#000">12</div>
<div class="c" style="left:576px;top:441px;width:64px;color:#000">KUWY TECH</div>
<div class="c" style="left:640px;top:441px;width:64px;color:#000">KUWY TECH</div>
<div class="c" style="left:704px;top:441px;width:64px;color:#000">A</div>
<div class="c" style="left:768px;top:441px;width:64px;color:#000">THANE</div>
<div class="c r" style="left:832px;top:441px;width:77px;color:#000;letter-spacing:0.5px">10/6/2022</div>
<div class="c" style="left:909px;top:441px;width:64px;color:#000">MH04GM3412</div>
<div class="c r" style="left:973px;top:441px;width:70px;color:#000;letter-spacing:0.5px">1/9/1986</div>
<div class="c" style="left:1043px;top:441px;width:64px;color:#000">E</div>
<div class="c" style="left:1107px;top:441px;width:64px;color:#000"></div>
<div class="c" style="left:1171px;top:441px;width:64px;color:#000">FLAT 007 A</div>
<div class="c" style="left:1235px;top:441px;width:64px;color:#000">FLAT 007 A</div>
<div class="c" style="left:1299px;top:441px;width:192px;color:#000">SAIRAM HOTEL KALHER</div>
<div class="c" style="left:1491px;top:441px;width:64px;color:#000">THANE</div>
<div class="c r" style="left:1555px;top:441px;width:69px;color:#000">421301</div>
<div class="c r" style="left:1624px;top:441px;width:67px;color:#000">21212121</div>
<div class="c" style="left:1691px;top:441px;width:64px;color:#000"></div>
<div class="c r" style="left:1755px;top:441px;width:81px;color:#000">9481357734</div>
<div class="c" style="left:1836px;top:441px;width:63px;color:#000">5 STR WITH</div>
<div class="c r" style="left:26px;top:461px;width:69px;color:#000">12980</div>
<div class="c r" style="left:95px;top:461px;width:69px;color:#000">12773</div>
<div class="c r" style="left:164px;top:461px;width:69px;color:#000">0</div>
<div class="c r" style="left:233px;top:461px;width:69px;color:#000">93451</div>
<div class="c r" style="left:302px;top:461px;width:69px;color:#000">11</div>
<div class="c r" style="left:371px;top:461px;width:69px;color:#000">311</div>
<div class="c r" style="left:507px;top:461px;width:69px;color:#000">11</div>
<div class="c" style="left:576px;top:461px;width:64px;color:#000">A K GANDHI</div>
<div class="c" style="left:640px;top:461px;width:64px;color:#000">ACE CARS PVT</div>
<div class="c" style="left:704px;top:461px;width:64px;color:#000">E</div>
<div class="c" style="left:768px;top:461px;width:64px;color:#000">THANE</div>
<div class="c r" style="left:832px;top:461px;width:77px;color:#000;letter-spacing:0.5px">1/4/2024</div>
<div class="c" style="left:909px;top:461px;width:64px;color:#000"></div>
<div class="c" style="left:973px;top:461px;width:70px;color:#000;letter-spacing:0.5px">15-03-1981</div>
<div class="c" style="left:1043px;top:461px;width:64px;color:#000">E</div>
<div class="c" style="left:1107px;top:461px;width:64px;color:#000"></div>
<div class="c" style="left:1171px;top:461px;width:64px;color:#000">HOUSE NO 23</div>
<div class="c" style="left:1235px;top:461px;width:64px;color:#000">HOUSE NO 23</div>
<div class="c" style="left:1299px;top:461px;width:64px;color:#000">DANDEKAR</div>
<div class="c" style="left:1363px;top:461px;width:128px;color:#000">BHIWANDI THANE</div>
<div class="c" style="left:1491px;top:461px;width:64px;color:#000">BHIWANDI</div>
<div class="c r" style="left:1555px;top:461px;width:69px;color:#000">421302</div>
<div class="c r" style="left:1624px;top:461px;width:67px;color:#000">21212121</div>
<div class="c" style="left:1691px;top:461px;width:64px;color:#000"></div>
<div class="c r" style="left:1755px;top:461px;width:81px;color:#000">9834722726</div>
<div class="c" style="left:1836px;top:461px;width:63px;color:#000">THUNDER</div>
<div class="c r" style="left:26px;top:481px;width:69px;color:#000">14100</div>
<div class="c r" style="left:95px;top:481px;width:69px;color:#000">58170</div>
<div class="c r" style="left:164px;top:481px;width:69px;color:#000">3834</div>
<div class="c r" style="left:233px;top:481px;width:69px;color:#000">328968</div>
<div class="c r" style="left:302px;top:481px;width:69px;color:#000">13</div>
<div class="c r" style="left:371px;top:481px;width:69px;color:#000">383</div>
<div class="c r" style="left:507px;top:481px;width:69px;color:#000">13</div>
<div class="c" style="left:576px;top:481px;width:64px;color:#000"></div>
<div class="c" style="left:640px;top:481px;width:64px;color:#000">JMD MARKETING</div>
<div class="c" style="left:704px;top:481px;width:64px;color:#000">S</div>
<div class="c" style="left:768px;top:481px;width:64px;color:#000">THANE</div>
<div class="c r" style="left:832px;top:481px;width:77px;color:#000;letter-spacing:0.5px">1/7/2022</div>
<div class="c" style="left:909px;top:481px;width:64px;color:#000">MH05DE3012</div>
<div class="c r" style="left:973px;top:481px;width:70px;color:#000;letter-spacing:0.5px">7/12/1981</div>
<div class="c" style="left:1043px;top:481px;width:64px;color:#000">E</div>
<div class="c" style="left:1107px;top:481px;width:64px;color:#000">E</div>
<div class="c" style="left:1171px;top:481px;width:64px;color:#000">FLAT NO 2</div>
<div class="c" style="left:1235px;top:481px;width:64px;color:#000">FLAT NO 2</div>
<div class="c" style="left:1299px;top:481px;width:64px;color:#000">RESIDENCY</div>
<div class="c" style="left:1363px;top:481px;width:128px;color:#000">THANE 9167467999</div>
<div class="c" style="left:1491px;top:481px;width:64px;color:#000">THANE</div>
<div class="c r" style="left:1555px;top:481px;width:69px;color:#000">421306</div>
<div class="c r" style="left:1624px;top:481px;width:67px;color:#000">21212121</div>
<div class="c" style="left:1691px;top:481px;width:64px;color:#000"></div>
<div class="c r" style="left:1755px;top:481px;width:81px;color:#000">9167467999</div>
<div class="c" style="left:1836px;top:481px;width:63px;color:#000">ZDI PLUS</div>
<div style="position:absolute;left:439px;top:41px;width:68px;height:460px;background:#d6dce4"></div>
<div class="c r" style="left:440px;top:41px;width:67px;color:#000;border-color:transparent">409</div>
<div class="c r" style="left:440px;top:61px;width:67px;color:#000;border-color:transparent">603</div>
<div class="c r" style="left:440px;top:81px;width:67px;color:#000;border-color:transparent">289</div>
<div class="c r" style="left:440px;top:101px;width:67px;color:#000;border-color:transparent">350</div>
<div class="c ctr" style="left:440px;top:121px;width:67px;color:#000;border-color:transparent">#N/A</div>
<div class="c r" style="left:440px;top:141px;width:67px;color:#000;border-color:transparent">576</div>
<div class="c b r" style="left:440px;top:161px;width:67px;color:#0000cc;border-color:transparent">0</div>
<div class="c r" style="left:440px;top:181px;width:67px;color:#000;border-color:transparent">476</div>
<div class="c r" style="left:440px;top:201px;width:67px;color:#000;border-color:transparent">320</div>
<div class="c r" style="left:440px;top:221px;width:67px;color:#000;border-color:transparent">167</div>
<div class="c r" style="left:440px;top:241px;width:67px;color:#000;border-color:transparent">598</div>
<div class="c r" style="left:440px;top:261px;width:67px;color:#000;border-color:transparent">409</div>
<div class="c r" style="left:440px;top:281px;width:67px;color:#000;border-color:transparent">698</div>
<div class="c r" style="left:440px;top:301px;width:67px;color:#000;border-color:transparent">471</div>
<div class="c r" style="left:440px;top:321px;width:67px;color:#000;border-color:transparent">355</div>
<div class="c r" style="left:440px;top:341px;width:67px;color:#000;border-color:transparent">334</div>
<div class="c r" style="left:440px;top:361px;width:67px;color:#000;border-color:transparent">233</div>
<div class="c r" style="left:440px;top:381px;width:67px;color:#000;border-color:transparent">350</div>
<div class="c r" style="left:440px;top:401px;width:67px;color:#000;border-color:transparent">515</div>
<div class="c b r" style="left:440px;top:421px;width:67px;color:#ff00ff;border-color:transparent">576</div>
<div class="c r" style="left:440px;top:441px;width:67px;color:#000;border-color:transparent">386</div>
<div class="c r" style="left:440px;top:461px;width:67px;color:#000;border-color:transparent">334</div>
<div class="c r" style="left:440px;top:481px;width:67px;color:#000;border-color:transparent">395</div>
<div style="position:absolute;left:1898px;top:21px;width:1px;height:755px;background:#c6c6c6"></div>
</div>
<!-- vertical scrollbar -->
<div class="abs" style="left:1900px;top:214px;width:20px;height:777px;background:#fff"></div>
<div class="abs" style="left:1902px;top:217px;width:15px;height:14px;border:1px solid #ababab;background:#fff"></div>
<svg class="abs" style="left:1906px;top:222px" width="7" height="4"><path d="M0 4h7L3.5 0z" fill="#777"/></svg>
<div class="abs" style="left:1902px;top:232px;width:15px;height:723px;border:1px solid #ababab;background:#fff"></div>
<div class="abs" style="left:1902px;top:955px;width:15px;height:21px;background:#f0f0f0"></div>
<div class="abs" style="left:1902px;top:976px;width:15px;height:15px;border:1px solid #ababab;background:#fff"></div>
<svg class="abs" style="left:1906px;top:982px" width="7" height="4"><path d="M0 0h7L3.5 4z" fill="#555"/></svg>

<!-- sheet tab bar -->
<div class="abs" style="left:0;top:990px;width:1920px;height:1px;background:#ababab"></div>
<div class="abs" style="left:0;top:991px;width:1920px;height:26px;background:#f3f3f3"></div>
<svg class="abs" style="left:27px;top:999px" width="5" height="9"><path d="M5 0v9L0 4.5z" fill="#c0c0c0"/></svg>
<svg class="abs" style="left:56px;top:999px" width="5" height="9"><path d="M0 0v9L5 4.5z" fill="#c0c0c0"/></svg>
<div class="abs" style="left:100px;top:990px;width:66px;height:25px;background:#fff;border-left:1px solid #ababab;border-right:1px solid #ababab"></div>
<div class="abs" style="left:100px;top:1013px;width:66px;height:2px;background:#217346"></div>
<div class="abs" style="left:100px;top:995px;width:66px;text-align:center;font-size:12.2px;font-weight:bold;color:#217346;line-height:16px">Sheet1</div>
<div class="abs" style="left:178px;top:995px;font-size:12.2px;color:#444;line-height:16px">Sheet2</div>
<div class="abs" style="left:229px;top:994px;width:1px;height:19px;background:#c6c6c6"></div>
<svg class="abs" style="left:262px;top:995px" width="17" height="17"><circle cx="8.5" cy="8.5" r="7.5" fill="none" stroke="#666" stroke-width="1.2"/><path d="M8.5 4.5v8M4.5 8.5h8" stroke="#666" stroke-width="1.6"/></svg>
<!-- horizontal scrollbar -->
<svg class="abs" style="left:1152px;top:998px" width="3" height="12"><circle cx="1.5" cy="1.5" r="1" fill="#999"/><circle cx="1.5" cy="6" r="1" fill="#999"/><circle cx="1.5" cy="10.5" r="1" fill="#999"/></svg>
<div class="abs" style="left:1169px;top:997px;width:731px;height:15px;background:#e9e9e9"></div>
<div class="abs" style="left:1169px;top:997px;width:15px;height:15px;border:1px solid #ababab;background:#fff"></div>
<svg class="abs" style="left:1174px;top:1001px" width="4" height="7"><path d="M4 0v7L0 3.5z" fill="#555"/></svg>
<div class="abs" style="left:1266px;top:997px;width:134px;height:15px;border:1px solid #ababab;background:#fff"></div>
<div class="abs" style="left:1886px;top:997px;width:15px;height:15px;border:1px solid #ababab;background:#fff"></div>
<svg class="abs" style="left:1892px;top:1001px" width="4" height="7"><path d="M0 0v7L4 3.5z" fill="#555"/></svg>

<!-- Activate windows watermark -->
<div class="abs" style="left:1598px;top:947px;font-size:20px;color:rgba(120,120,120,0.5);line-height:23px">Activate Windows</div>
<div class="abs" style="left:1598px;top:972px;font-size:15px;color:rgba(120,120,120,0.5);line-height:17px">Go to Settings to activate Windows.</div>

<!-- status bar -->
<div class="abs" style="left:0;top:1017px;width:1920px;height:1px;background:#fff"></div><div class="abs" style="left:0;top:1018px;width:1920px;height:22px;background:#217346"></div>
<div class="abs" style="left:7px;top:1022px;font-size:10.5px;color:#fff;line-height:14px">READY</div>
<div class="abs" style="left:1630px;top:1018px;width:37px;height:22px;background:#1a5c38"></div>
<svg class="abs" style="left:1640px;top:1022px" width="14" height="13"><path d="M0.5 0.5h13v12H0.5zM0.5 4.5h13M0.5 8.5h13M4.5 0.5v12M9.5 0.5v12" fill="none" stroke="#fff"/></svg>
<svg class="abs" style="left:1678px;top:1022px" width="14" height="13"><rect x="0.5" y="0.5" width="13" height="12" fill="none" stroke="#fff"/><rect x="3.5" y="3" width="7" height="7" fill="none" stroke="#fff"/><path d="M5 5h4M5 7h4" stroke="#fff"/></svg>
<svg class="abs" style="left:1715px;top:1021px" width="14" height="13"><rect x="0.5" y="0.5" width="13" height="12" fill="none" stroke="#fff"/><rect x="3" y="0.5" width="3" height="8" fill="#fff"/><rect x="8" y="0.5" width="3" height="6" fill="#fff"/></svg>
<div class="abs" style="left:1746px;top:1028px;width:7px;height:2px;background:#fff"></div>
<div class="abs" style="left:1756px;top:1028px;width:100px;height:1px;background:#fff"></div>
<div class="abs" style="left:1804px;top:1022px;width:3px;height:13px;background:#fff"></div>
<svg class="abs" style="left:1859px;top:1023px" width="10" height="10"><path d="M5 0v10M0 5h10" stroke="#fff" stroke-width="2"/></svg>
<div class="abs" style="left:1883px;top:1021px;font-size:11px;color:#fff;line-height:15px">100%</div>

<!-- taskbar -->
<div class="abs" style="left:0;top:1040px;width:1920px;height:40px;background:linear-gradient(to right,#233842 0%,#243743 38%,#22343f 52%,#1f2e3e 68%,#1d2c3e 78%,#1b2842 100%)"></div>
<svg class="abs" style="left:15px;top:1051px" width="18" height="18"><path d="M0 2.5l7.5-1v7H0zM8.5 1.3L18 0v8.5H8.5zM0 9.5h7.5v7L0 15.5zM8.5 9.5H18V18l-9.5-1.3z" fill="#fff"/></svg>
<div class="abs" style="left:48px;top:1040px;width:344px;height:40px;background:#f3f3f3"></div>
<svg class="abs" style="left:58px;top:1049px" width="20" height="22"><circle cx="12" cy="8" r="6" fill="none" stroke="#222" stroke-width="1.6"/><path d="M7.5 12.5L1 20" stroke="#222" stroke-width="1.8"/></svg>
<div class="abs" style="left:88px;top:1051px;font-size:14.5px;color:#222;line-height:18px">Type here to search</div>
<svg class="abs" style="left:405px;top:1050px" width="20" height="20"><circle cx="10" cy="10" r="7.5" fill="none" stroke="#fff" stroke-width="1.8"/></svg>
<svg class="abs" style="left:455px;top:1051px" width="18" height="18"><rect x="1" y="4" width="11" height="10" fill="none" stroke="#fff" stroke-width="1.4"/><path d="M1 1h11M1 17h11" stroke="#fff" stroke-width="1.4"/><rect x="14.5" y="4" width="2" height="2" fill="#fff"/><path d="M15.5 8v9" stroke="#fff" stroke-width="1.4"/></svg>
<!-- edge -->
<svg class="abs" style="left:501px;top:1047px" width="26" height="26"><defs><linearGradient id="eg" x1="0" y1="0" x2="1" y2="1"><stop offset="0" stop-color="#3bc5a8"/><stop offset="0.5" stop-color="#2a8fd8"/><stop offset="1" stop-color="#1560b0"/></linearGradient></defs><circle cx="13" cy="13" r="12" fill="url(#eg)"/><path d="M6 15c0-6 10-7 13-2-2-1-7-1-7 3 0 3 5 5 9 3-3 5-15 5-15-4z" fill="#22343f" opacity="0.55"/></svg>
<!-- file explorer -->
<svg class="abs" style="left:553px;top:1049px" width="22" height="20"><path d="M0 2h8l2 2h12v15H0z" fill="#e8b43a"/><rect x="0" y="6" width="22" height="13" fill="#fcd05c"/><rect x="6" y="13" width="10" height="6" fill="#2b78c7"/><rect x="9" y="15" width="4" height="4" fill="#fcd05c"/></svg>
<div class="abs" style="left:544px;top:1078px;width:40px;height:2px;background:#76b9ed"></div>
<!-- chrome -->
<svg class="abs" style="left:601px;top:1048px" width="24" height="24"><circle cx="12" cy="12" r="11.5" fill="#db4437"/><path d="M12 12L2 6.5A11.5 11.5 0 0 0 9 23.2z" fill="#0f9d58"/><path d="M12 12l10.3-5A11.5 11.5 0 0 1 9 23.2z" fill="#f4b400"/><circle cx="12" cy="12" r="5.2" fill="#fff"/><circle cx="12" cy="12" r="4" fill="#4285f4"/></svg>
<div class="abs" style="left:593px;top:1078px;width:40px;height:2px;background:#76b9ed"></div>
<!-- excel active -->
<div class="abs" style="left:638px;top:1040px;width:46px;height:40px;background:#3c4a55"></div>
<svg class="abs" style="left:650px;top:1048px" width="23" height="22"><path d="M0 3L12 1v20L0 19z" fill="#217346"/><rect x="12" y="4" width="9" height="14" fill="#fff" stroke="#217346" stroke-width="1.4"/><path d="M14 7h5M14 10h5M14 13h5M14 16h5M16.5 5v12" stroke="#217346"/><path d="M3 7l6 8M9 7l-6 8" stroke="#fff" stroke-width="2"/></svg>
<div class="abs" style="left:638px;top:1078px;width:46px;height:2px;background:#76b9ed"></div>
<div class="abs" style="left:682px;top:1040px;width:3px;height:40px;background:#2a3844"></div>
<!-- cmd -->
<svg class="abs" style="left:699px;top:1050px" width="23" height="19"><rect x="0.5" y="0.5" width="22" height="18" fill="#000" stroke="#777"/><path d="M2 2.5h19" stroke="#aaa"/><text x="2" y="10" font-size="5" fill="#ccc" font-family="Liberation Mono">C:\</text><path d="M12 9h8" stroke="#ccc"/></svg>
<div class="abs" style="left:691px;top:1078px;width:40px;height:2px;background:#76b9ed"></div>
<!-- tray -->
<svg class="abs" style="left:1549px;top:1052px" width="24" height="16"><rect x="1" y="1" width="22" height="14" fill="none" stroke="#fff" stroke-width="1.4"/><rect x="4" y="4" width="7" height="8" fill="none" stroke="#fff"/><path d="M13 5h7M13 8h7M13 11h7" stroke="#fff"/></svg>
<div class="abs" style="left:1580px;top:1054px;font-size:14px;color:#fff;line-height:17px">33°C&nbsp; Smoke</div>
<svg class="abs" style="left:1676px;top:1054px" width="13" height="8"><path d="M1 7l5.5-5.5L12 7" fill="none" stroke="#fff" stroke-width="1.3"/></svg>
<svg class="abs" style="left:1700px;top:1051px" width="14" height="17"><rect x="2" y="4" width="9" height="10" rx="2" fill="none" stroke="#fff" stroke-width="1.2"/><path d="M6.5 1v3M11 9h3" stroke="#fff" stroke-width="1.2"/></svg>
<svg class="abs" style="left:1722px;top:1052px" width="20" height="16"><rect x="6" y="1" width="13" height="9" fill="none" stroke="#fff" stroke-width="1.2"/><rect x="1" y="5" width="6" height="9" fill="none" stroke="#fff" stroke-width="1.2"/><path d="M12 10v4M9 14h6" stroke="#fff" stroke-width="1.2"/></svg>
<svg class="abs" style="left:1746px;top:1052px" width="20" height="16"><path d="M1 5h4l5-4v14l-5-4H1z" fill="none" stroke="#fff" stroke-width="1.2"/><path d="M12 5c1.5 1.5 1.5 4.5 0 6M14.5 3c2.5 2.5 2.5 7.5 0 10" fill="none" stroke="#fff" stroke-width="1.2"/></svg>
<div class="abs" style="left:1772px;top:1044px;width:30px;text-align:center;font-size:12.5px;color:#fff;line-height:17px">ENG<br>US</div>
<div class="abs" style="left:1795px;top:1044px;width:80px;text-align:center;font-size:12.5px;color:#fff;line-height:17px">3:55 PM<br>7/19/2022</div>
<svg class="abs" style="left:1878px;top:1051px" width="27" height="26"><path d="M1 1h16v12H8l-4 4v-4H1z" fill="#fff"/><path d="M4 4.5h10M4 7.5h10M4 10.5h7" stroke="#1b2842"/><circle cx="17" cy="16" r="7.5" fill="#3a3a3a" stroke="#1b2842" stroke-width="1"/><text x="14" y="20.5" font-size="11" fill="#fff" font-family="Liberation Sans" font-weight="bold">1</text></svg><div class="abs" style="left:1916px;top:1040px;width:1px;height:40px;background:#5a6677"></div>

</body></html>
